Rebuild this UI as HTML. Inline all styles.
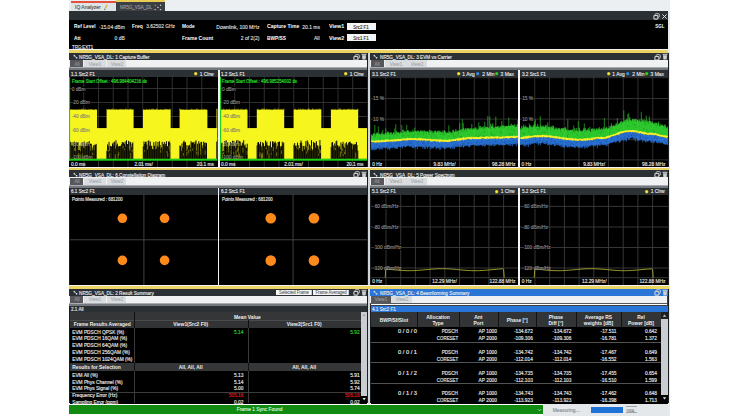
<!DOCTYPE html>
<html><head><meta charset="utf-8"><style>
html,body{margin:0;padding:0;}
body{width:740px;height:416px;overflow:hidden;background:#fff;position:relative;font-family:"Liberation Sans",sans-serif;}
body>div{position:absolute;}
svg{display:block}
</style></head><body>
<div style="left:69px;top:0px;width:601px;height:11px;background:#eceff2;"></div>
<div style="left:70.5px;top:1.2px;width:45.3px;height:2.2px;background:#e4503c;"></div>
<div style="left:70.5px;top:3.4px;width:45.3px;height:7.6px;background:#dde3e7;"></div>
<div style="left:75px;top:3.20px;height:8px;line-height:8px;font-size:5.5px;color:#4e5358;white-space:nowrap;transform:scaleX(0.9);transform-origin:left;-webkit-text-stroke:0.15px #4e5358;">IQ Analyzer</div>
<svg style="position:absolute;left:103px;top:4px" width="5" height="6.5" viewBox="0 0 5 6.5"><path d="M3.6,0.6 L4.6,1.2 L2.2,5.6 L1.2,5.1 Z" fill="#e0b020"/><path d="M1.2,5.1 L2.2,5.6 L1.3,6.3 Z" fill="#303030"/></svg>
<div style="left:115.8px;top:0px;width:49.2px;height:2.2px;background:#e9cd55;"></div>
<div style="left:115.8px;top:2.2px;width:49.2px;height:8.8px;background:#3c3f43;"></div>
<div style="left:120.2px;top:3.20px;height:8px;line-height:8px;font-size:5.3px;color:#9a9ea2;white-space:nowrap;transform:scaleX(0.84);transform-origin:left;-webkit-text-stroke:0.15px #9a9ea2;">NR5G_VSA_DL</div>
<svg style="position:absolute;left:153.5px;top:3.5px" width="8.0" height="7.0" viewBox="0 0 8.0 7.0"><g fill="#d8d8d8"><circle cx="1.2" cy="5.6" r="0.7"/><circle cx="6.6" cy="1.2" r="0.7"/><circle cx="6.6" cy="5.6" r="0.7"/><circle cx="3.9" cy="3.4" r="0.7"/><circle cx="1.2" cy="1.2" r="0.5"/></g></svg>
<div style="left:69px;top:11px;width:599px;height:9px;background:#2b3034;"></div>
<div style="left:668px;top:11px;width:2px;height:405px;background:#e8ebee;"></div>
<div style="left:69px;top:20px;width:599px;height:29px;background:#000;"></div>
<div style="left:69px;top:49px;width:599px;height:1px;background:#f2f2f2;"></div>
<div style="left:69px;top:50px;width:599px;height:3px;background:#ecd462;"></div>
<svg style="position:absolute;left:653.2px;top:12.6px" width="7.0" height="7.000000000000002" viewBox="0 0 7.0 7.000000000000002"><path d="M2.2,2.2 V1.4 Q2.2,0.7 2.9,0.7 H5.6 Q6.3,0.7 6.3,1.4 V3.6 Q6.3,4.3 5.6,4.3 H4.9" fill="none" stroke="#d0d0d0" stroke-width="0.9"/><rect x="0.9" y="2.5" width="4" height="3.6" rx="0.9" fill="none" stroke="#d0d0d0" stroke-width="1.1"/></svg>
<svg style="position:absolute;left:661.4px;top:12.6px" width="7.0" height="7.000000000000002" viewBox="0 0 7.0 7.000000000000002"><path d="M1.4,1.4 L5.6,5.6 M5.6,1.4 L1.4,5.6" stroke="#e0e0e0" stroke-width="1.0"/></svg>
<div style="left:74px;top:22.10px;height:8px;line-height:8px;font-size:5.9px;color:#fff;font-weight:bold;white-space:nowrap;transform:scaleX(0.82);transform-origin:left;">Ref Level</div>
<div style="left:99px;top:23.20px;height:8px;line-height:8px;font-size:5.0px;color:#ddd;white-space:nowrap;-webkit-text-stroke:0.15px #ddd;">-15.04 dBm</div>
<div style="left:132.2px;top:22.10px;height:8px;line-height:8px;font-size:5.9px;color:#fff;font-weight:bold;white-space:nowrap;transform:scaleX(0.84);transform-origin:left;">Freq</div>
<div style="right:565px;text-align:right;top:23.20px;height:8px;line-height:8px;font-size:4.9px;color:#ddd;white-space:nowrap;-webkit-text-stroke:0.15px #ddd;">3.62502 GHz</div>
<div style="left:181.5px;top:22.10px;height:8px;line-height:8px;font-size:5.9px;color:#fff;font-weight:bold;white-space:nowrap;transform:scaleX(0.82);transform-origin:left;">Mode</div>
<div style="right:480.6px;text-align:right;top:23.20px;height:8px;line-height:8px;font-size:5.0px;color:#ddd;white-space:nowrap;-webkit-text-stroke:0.15px #ddd;">Downlink, 100 MHz</div>
<div style="left:266.8px;top:22.10px;height:8px;line-height:8px;font-size:5.9px;color:#fff;font-weight:bold;white-space:nowrap;transform:scaleX(0.86);transform-origin:left;">Capture Time</div>
<div style="right:420px;text-align:right;top:23.20px;height:8px;line-height:8px;font-size:5.0px;color:#ddd;white-space:nowrap;-webkit-text-stroke:0.15px #ddd;">20.1 ms</div>
<div style="left:329px;top:22.10px;height:8px;line-height:8px;font-size:5.9px;color:#fff;font-weight:bold;white-space:nowrap;transform:scaleX(0.92);transform-origin:left;">View1</div>
<div style="left:346.5px;top:23px;width:29.5px;height:6.5px;background:#f4f4f4;"></div>
<div style="left:211px;width:300px;text-align:center;top:23.10px;height:8px;line-height:8px;font-size:5.0px;color:#333;white-space:nowrap;transform:scaleX(0.88);transform-origin:center;-webkit-text-stroke:0.15px #333;">Src2 F1</div>
<div style="left:74px;top:33.50px;height:8px;line-height:8px;font-size:5.9px;color:#fff;font-weight:bold;white-space:nowrap;transform:scaleX(0.82);transform-origin:left;">Att</div>
<div style="right:615.2px;text-align:right;top:34.40px;height:8px;line-height:8px;font-size:5.0px;color:#ddd;white-space:nowrap;-webkit-text-stroke:0.15px #ddd;">0 dB</div>
<div style="left:181.5px;top:33.50px;height:8px;line-height:8px;font-size:5.9px;color:#fff;font-weight:bold;white-space:nowrap;transform:scaleX(0.86);transform-origin:left;">Frame Count</div>
<div style="right:480.6px;text-align:right;top:34.40px;height:8px;line-height:8px;font-size:5.0px;color:#ddd;white-space:nowrap;-webkit-text-stroke:0.15px #ddd;">2 of 2(2)</div>
<div style="left:266.8px;top:33.50px;height:8px;line-height:8px;font-size:5.9px;color:#fff;font-weight:bold;white-space:nowrap;transform:scaleX(0.82);transform-origin:left;">BWP/SS</div>
<div style="right:420.5px;text-align:right;top:34.40px;height:8px;line-height:8px;font-size:5.0px;color:#ddd;white-space:nowrap;-webkit-text-stroke:0.15px #ddd;">All</div>
<div style="left:329px;top:33.50px;height:8px;line-height:8px;font-size:5.9px;color:#fff;font-weight:bold;white-space:nowrap;transform:scaleX(0.92);transform-origin:left;">View2</div>
<div style="left:346.5px;top:34px;width:29.5px;height:6.5px;background:#f4f4f4;"></div>
<div style="left:211px;width:300px;text-align:center;top:34.10px;height:8px;line-height:8px;font-size:5.0px;color:#333;white-space:nowrap;transform:scaleX(0.88);transform-origin:center;-webkit-text-stroke:0.15px #333;">Src1 F1</div>
<div style="left:71.5px;top:43.00px;height:8px;line-height:8px;font-size:5.0px;color:#e4e4e4;white-space:nowrap;transform:scaleX(0.86);transform-origin:left;-webkit-text-stroke:0.15px #e4e4e4;">TRG:EXT1</div>
<div style="right:76px;text-align:right;top:22.20px;height:8px;line-height:8px;font-size:5.6px;color:#fff;font-weight:bold;white-space:nowrap;transform:scaleX(0.8);transform-origin:right;">SGL</div>
<div style="left:367.5px;top:53px;width:2.6999999999999886px;height:350.5px;background:#d3d6d9;"></div>
<div style="left:69.4px;top:52.8px;width:0.7999999999999972px;height:350.7px;background:#1c1f22;"></div>
<div style="left:366.9px;top:52.8px;width:0.6000000000000227px;height:350.7px;background:#1c1f22;"></div>
<div style="left:370.2px;top:52.8px;width:0.8000000000000114px;height:350.7px;background:#1c1f22;"></div>
<div style="left:667.8px;top:52.8px;width:0.5px;height:350.7px;background:#1c1f22;"></div>
<div style="left:69px;top:167px;width:600px;height:1px;background:#f2f2f2;"></div>
<div style="left:69px;top:168px;width:600px;height:2px;background:#ecd462;"></div>
<div style="left:69px;top:285px;width:600px;height:1px;background:#f2f2f2;"></div>
<div style="left:69px;top:286px;width:600px;height:3px;background:#ecd462;"></div>
<div style="left:69.4px;top:52.8px;width:298.1px;height:7.0px;background:#2b3035;"></div>
<svg style="position:absolute;left:72.60000000000001px;top:54.4px" width="5.0" height="5.0" viewBox="0 0 5.0 5.0"><rect x="0.6" y="0.9" width="1.5" height="1.5" fill="#d8d8d8"/><path d="M1.6,1.9 L3.6,3.9" stroke="#d8d8d8" stroke-width="0.8"/><rect x="2.9" y="3.0" width="1.4" height="1.6" fill="#d8d8d8"/></svg>
<div style="left:79.0px;top:53.10px;height:8px;line-height:8px;font-size:5.1px;color:#e6e6e6;white-space:nowrap;transform:scaleX(0.92);transform-origin:left;-webkit-text-stroke:0.15px #e6e6e6;">NR5G_VSA_DL: 1 Capture Buffer</div>
<svg style="position:absolute;left:352.7px;top:53.599999999999994px" width="7.0" height="7.0" viewBox="0 0 7.0 7.0"><path d="M2.2,2.2 V1.4 Q2.2,0.7 2.9,0.7 H5.6 Q6.3,0.7 6.3,1.4 V3.6 Q6.3,4.3 5.6,4.3 H4.9" fill="none" stroke="#d0d0d0" stroke-width="0.9"/><rect x="0.9" y="2.5" width="4" height="3.6" rx="0.9" fill="none" stroke="#d0d0d0" stroke-width="1.1"/></svg>
<svg style="position:absolute;left:361.0px;top:53.0px" width="6.0" height="7.0" viewBox="0 0 6.0 7.0"><rect x="0.5" y="0.8" width="5" height="1" fill="#d0d0d0"/><path d="M1,2.3 L5,2.3 L4.6,6.6 L1.4,6.6 Z" fill="#d0d0d0"/></svg>
<div style="left:69.4px;top:59.8px;width:298.1px;height:7.5px;background:#eff1f3;"></div>
<div style="left:70.30000000000001px;top:60.099999999999994px;width:12.700000000000003px;height:7.299999999999997px;background:#57565a;"></div>
<div style="left:-73.35px;width:300px;text-align:center;top:60.60px;height:8px;line-height:8px;font-size:4.9px;color:#8e9194;white-space:nowrap;transform:scaleX(0.95);transform-origin:center;-webkit-text-stroke:0.15px #8e9194;">All</div>
<div style="left:83.70000000000002px;top:60.099999999999994px;width:22.200000000000003px;height:7.299999999999997px;background:#dadde0;"></div>
<div style="left:-55.19999999999999px;width:300px;text-align:center;top:60.60px;height:8px;line-height:8px;font-size:4.9px;color:#a9acaf;white-space:nowrap;transform:scaleX(0.95);transform-origin:center;-webkit-text-stroke:0.15px #a9acaf;">View1</div>
<div style="left:106.60000000000002px;top:60.099999999999994px;width:19.799999999999997px;height:7.299999999999997px;background:#dadde0;"></div>
<div style="left:-33.49999999999997px;width:300px;text-align:center;top:60.60px;height:8px;line-height:8px;font-size:4.9px;color:#a9acaf;white-space:nowrap;transform:scaleX(0.95);transform-origin:center;-webkit-text-stroke:0.15px #a9acaf;">View2</div>
<div style="left:69.4px;top:67.3px;width:298.1px;height:1.0px;background:#a9adb1;"></div>
<div style="left:69.4px;top:68.3px;width:298.1px;height:2.0px;background:#74787c;"></div>
<div style="left:69.4px;top:70.3px;width:148.6px;height:6.299999999999997px;background:#2b3035;"></div>
<div style="left:70.9px;top:69.55px;height:8px;line-height:8px;font-size:5.3px;color:#e8e8e8;white-space:nowrap;transform:scaleX(0.87);transform-origin:left;-webkit-text-stroke:0.15px #e8e8e8;">1.1 Src2 F1</div>
<div style="right:526.0px;text-align:right;top:69.55px;height:8px;line-height:8px;font-size:5.9px;color:#e8e8e8;white-space:nowrap;transform:scaleX(0.84);transform-origin:right;-webkit-text-stroke:0.15px #e8e8e8;">1 Clrw</div>
<svg style="position:absolute;left:193.35748375px;top:70.94999999999999px" width="6.0" height="6.0" viewBox="0 0 6.0 6.0"><circle cx="2.7" cy="2.7" r="1.85" fill="#f5e63a" stroke="#111" stroke-width="0.4"/></svg>
<div style="left:219.6px;top:70.3px;width:147.9px;height:6.299999999999997px;background:#2b3035;"></div>
<div style="left:221.1px;top:69.55px;height:8px;line-height:8px;font-size:5.3px;color:#e8e8e8;white-space:nowrap;transform:scaleX(0.87);transform-origin:left;-webkit-text-stroke:0.15px #e8e8e8;">1.2 Src1 F1</div>
<div style="right:376.5px;text-align:right;top:69.55px;height:8px;line-height:8px;font-size:5.9px;color:#e8e8e8;white-space:nowrap;transform:scaleX(0.84);transform-origin:right;-webkit-text-stroke:0.15px #e8e8e8;">1 Clrw</div>
<svg style="position:absolute;left:342.85748375px;top:70.94999999999999px" width="6.0" height="6.0" viewBox="0 0 6.0 6.0"><circle cx="2.7" cy="2.7" r="1.85" fill="#f5e63a" stroke="#111" stroke-width="0.4"/></svg>
<div style="left:69.4px;top:76.5px;width:148.4px;height:90.5px;background:#000;"></div>
<svg style="position:absolute;left:69.4px;top:76.5px" width="148.4" height="90.5" viewBox="0 0 148.4 90.5"><line x1="14.75" y1="0" x2="14.75" y2="90.5" stroke="#363636" stroke-width="0.9"/><line x1="29.50" y1="0" x2="29.50" y2="90.5" stroke="#363636" stroke-width="0.9"/><line x1="44.25" y1="0" x2="44.25" y2="90.5" stroke="#363636" stroke-width="0.9"/><line x1="59.00" y1="0" x2="59.00" y2="90.5" stroke="#363636" stroke-width="0.9"/><line x1="73.75" y1="0" x2="73.75" y2="90.5" stroke="#363636" stroke-width="0.9"/><line x1="88.50" y1="0" x2="88.50" y2="90.5" stroke="#363636" stroke-width="0.9"/><line x1="103.25" y1="0" x2="103.25" y2="90.5" stroke="#363636" stroke-width="0.9"/><line x1="118.00" y1="0" x2="118.00" y2="90.5" stroke="#363636" stroke-width="0.9"/><line x1="132.75" y1="0" x2="132.75" y2="90.5" stroke="#363636" stroke-width="0.9"/><line x1="0" y1="11.50" x2="148.4" y2="11.50" stroke="#363636" stroke-width="0.9"/><line x1="0" y1="25.50" x2="148.4" y2="25.50" stroke="#363636" stroke-width="0.9"/><line x1="0" y1="39.50" x2="148.4" y2="39.50" stroke="#363636" stroke-width="0.9"/><line x1="0" y1="53.50" x2="148.4" y2="53.50" stroke="#363636" stroke-width="0.9"/><line x1="0" y1="67.50" x2="148.4" y2="67.50" stroke="#363636" stroke-width="0.9"/><rect x="1.00" y="32.80" width="27.10" height="19.30" fill="#f6f61e"/><path d="M1.00,32.80v-0.39M1.70,32.80v-0.18M2.40,32.80v-0.78M3.10,32.80v-0.09M3.80,32.80v-0.64M4.50,32.80v-0.44M5.20,32.80v-0.07M5.90,32.80v-0.61M6.60,32.80v-0.04M7.30,32.80v-0.52M8.00,32.80v-0.08M8.70,32.80v-0.11M9.40,32.80v-0.51M10.10,32.80v-0.99M10.80,32.80v-0.15M11.50,32.80v-0.27M12.20,32.80v-0.75M12.90,32.80v-1.14M13.60,32.80v-0.69M14.30,32.80v-0.48M15.00,32.80v-1.17M15.70,32.80v-0.06M16.40,32.80v-1.03M17.10,32.80v-0.35M17.80,32.80v-0.17M18.50,32.80v-0.14M19.20,32.80v-0.37M19.90,32.80v-0.98M20.60,32.80v-0.22M21.30,32.80v-0.70M22.00,32.80v-0.77M22.70,32.80v-0.45M23.40,32.80v-0.66M24.10,32.80v-0.08M24.80,32.80v-0.07M25.50,32.80v-0.25M26.20,32.80v-0.82M26.90,32.80v-0.51M27.60,32.80v-0.38" stroke="#f6f61e" stroke-width="0.6"/><rect x="37.60" y="32.80" width="27.00" height="19.30" fill="#f6f61e"/><path d="M37.60,32.80v-0.70M38.30,32.80v-0.54M39.00,32.80v-0.36M39.70,32.80v-0.95M40.40,32.80v-0.84M41.10,32.80v-0.29M41.80,32.80v-0.69M42.50,32.80v-0.63M43.20,32.80v-1.05M43.90,32.80v-0.88M44.60,32.80v-0.35M45.30,32.80v-1.18M46.00,32.80v-0.14M46.70,32.80v-0.50M47.40,32.80v-0.91M48.10,32.80v-0.18M48.80,32.80v-0.59M49.50,32.80v-0.05M50.20,32.80v-0.80M50.90,32.80v-0.92M51.60,32.80v-0.69M52.30,32.80v-1.05M53.00,32.80v-0.38M53.70,32.80v-0.83M54.40,32.80v-0.71M55.10,32.80v-0.70M55.80,32.80v-0.55M56.50,32.80v-1.01M57.20,32.80v-1.13M57.90,32.80v-0.57M58.60,32.80v-0.80M59.30,32.80v-0.07M60.00,32.80v-0.84M60.70,32.80v-0.78M61.40,32.80v-1.19M62.10,32.80v-0.99M62.80,32.80v-0.34M63.50,32.80v-0.46M64.20,32.80v-0.80" stroke="#f6f61e" stroke-width="0.6"/><rect x="74.00" y="32.80" width="27.70" height="19.30" fill="#f6f61e"/><path d="M74.00,32.80v-0.03M74.70,32.80v-0.55M75.40,32.80v-0.20M76.10,32.80v-0.14M76.80,32.80v-0.07M77.50,32.80v-0.92M78.20,32.80v-0.16M78.90,32.80v-0.30M79.60,32.80v-0.47M80.30,32.80v-1.05M81.00,32.80v-0.10M81.70,32.80v-0.54M82.40,32.80v-0.66M83.10,32.80v-1.06M83.80,32.80v-0.98M84.50,32.80v-1.04M85.20,32.80v-0.33M85.90,32.80v-0.50M86.60,32.80v-0.43M87.30,32.80v-1.06M88.00,32.80v-1.15M88.70,32.80v-0.18M89.40,32.80v-0.21M90.10,32.80v-0.28M90.80,32.80v-0.28M91.50,32.80v-0.58M92.20,32.80v-0.71M92.90,32.80v-0.32M93.60,32.80v-0.00M94.30,32.80v-0.50M95.00,32.80v-0.44M95.70,32.80v-0.68M96.40,32.80v-1.14M97.10,32.80v-0.83M97.80,32.80v-0.62M98.50,32.80v-0.74M99.20,32.80v-0.81M99.90,32.80v-0.06M100.60,32.80v-1.08M101.30,32.80v-0.94" stroke="#f6f61e" stroke-width="0.6"/><rect x="110.60" y="32.80" width="27.80" height="19.30" fill="#f6f61e"/><path d="M110.60,32.80v-1.05M111.30,32.80v-0.96M112.00,32.80v-0.47M112.70,32.80v-0.48M113.40,32.80v-0.12M114.10,32.80v-0.76M114.80,32.80v-0.07M115.50,32.80v-0.08M116.20,32.80v-0.25M116.90,32.80v-0.19M117.60,32.80v-0.41M118.30,32.80v-0.06M119.00,32.80v-0.00M119.70,32.80v-0.18M120.40,32.80v-0.12M121.10,32.80v-0.44M121.80,32.80v-0.03M122.50,32.80v-1.05M123.20,32.80v-0.74M123.90,32.80v-0.18M124.60,32.80v-0.30M125.30,32.80v-0.42M126.00,32.80v-0.44M126.70,32.80v-0.15M127.40,32.80v-1.02M128.10,32.80v-1.19M128.80,32.80v-0.56M129.50,32.80v-0.58M130.20,32.80v-0.10M130.90,32.80v-0.12M131.60,32.80v-0.41M132.30,32.80v-0.32M133.00,32.80v-0.99M133.70,32.80v-0.19M134.40,32.80v-0.03M135.10,32.80v-1.14M135.80,32.80v-0.63M136.50,32.80v-0.18M137.20,32.80v-0.65M137.90,32.80v-0.03" stroke="#f6f61e" stroke-width="0.6"/><rect x="147.50" y="32.80" width="0.90" height="19.30" fill="#f6f61e"/><path d="M147.50,32.80v-0.63M148.20,32.80v-1.17" stroke="#f6f61e" stroke-width="0.6"/><rect x="1.00" y="51.30" width="147.40" height="10.50" fill="#f6f61e"/><rect x="27.60" y="51.30" width="10.50" height="30.60" fill="#f6f61e"/><rect x="64.10" y="51.30" width="10.40" height="30.60" fill="#f6f61e"/><rect x="101.20" y="51.30" width="9.90" height="30.60" fill="#f6f61e"/><rect x="137.90" y="51.30" width="10.10" height="30.60" fill="#f6f61e"/><rect x="1.00" y="60.90" width="27.10" height="21.00" fill="#f6f61e"/><rect x="37.60" y="60.90" width="27.00" height="21.00" fill="#f6f61e"/><rect x="74.00" y="60.90" width="27.70" height="21.00" fill="#f6f61e"/><rect x="110.60" y="60.90" width="27.80" height="21.00" fill="#f6f61e"/><rect x="147.50" y="60.90" width="0.90" height="21.00" fill="#f6f61e"/><path d="M1.30,81.90V64.74M2.00,81.90V65.34M2.70,81.90V68.40M3.40,81.90V68.56M4.10,81.90V65.02M4.80,81.90V69.86M5.50,81.90V64.64M6.20,81.90V74.24M6.90,81.90V65.47M7.60,81.90V65.60M8.30,81.90V65.52M9.00,81.90V65.10M9.70,81.90V73.30M10.40,81.90V73.00M11.10,81.90V68.45M11.80,81.90V74.33M12.50,81.90V69.23M13.20,81.90V65.14M13.90,81.90V68.63M14.60,81.90V70.60M15.30,81.90V64.57M16.00,81.90V71.66M16.70,81.90V68.86M17.40,81.90V65.76M18.10,81.90V67.43M18.80,81.90V65.16M19.50,81.90V66.79M20.20,81.90V64.05M20.90,81.90V67.16M21.60,81.90V66.70M22.30,81.90V66.87M23.00,81.90V70.46M23.70,81.90V73.21M24.40,81.90V68.36M25.10,81.90V73.06M25.80,81.90V67.56M26.50,81.90V67.96M27.20,81.90V66.89M37.90,81.90V73.76M38.60,81.90V67.30M39.30,81.90V69.32M40.00,81.90V64.87M40.70,81.90V73.88M41.40,81.90V68.91M42.10,81.90V69.26M42.80,81.90V69.45M43.50,81.90V66.66M44.20,81.90V65.48M44.90,81.90V68.62M45.60,81.90V64.59M46.30,81.90V71.57M47.00,81.90V63.26M47.70,81.90V68.39M48.40,81.90V66.61M49.10,81.90V70.05M49.80,81.90V69.04M50.50,81.90V69.19M51.20,81.90V69.00M51.90,81.90V68.81M52.60,81.90V67.27M53.30,81.90V65.15M54.00,81.90V65.05M54.70,81.90V66.03M55.40,81.90V67.00M56.10,81.90V64.58M56.80,81.90V69.64M57.50,81.90V63.27M58.20,81.90V66.98M58.90,81.90V67.03M59.60,81.90V63.86M60.30,81.90V72.32M61.00,81.90V64.77M61.70,81.90V65.32M62.40,81.90V70.19M63.10,81.90V66.80M63.80,81.90V65.43M74.30,81.90V69.33M75.00,81.90V64.51M75.70,81.90V67.01M76.40,81.90V64.95M77.10,81.90V64.61M77.80,81.90V67.43M78.50,81.90V72.45M79.20,81.90V63.97M79.90,81.90V63.37M80.60,81.90V68.76M81.30,81.90V64.57M82.00,81.90V69.34M82.70,81.90V68.67M83.40,81.90V72.00M84.10,81.90V72.66M84.80,81.90V65.17M85.50,81.90V68.68M86.20,81.90V72.26M86.90,81.90V64.52M87.60,81.90V71.52M88.30,81.90V68.90M89.00,81.90V64.87M89.70,81.90V69.73M90.40,81.90V64.23M91.10,81.90V67.92M91.80,81.90V72.36M92.50,81.90V70.33M93.20,81.90V64.80M93.90,81.90V72.65M94.60,81.90V67.08M95.30,81.90V65.09M96.00,81.90V69.39M96.70,81.90V66.79M97.40,81.90V64.12M98.10,81.90V69.23M98.80,81.90V69.26M99.50,81.90V64.76M100.20,81.90V64.22M100.90,81.90V66.01M110.90,81.90V68.51M111.60,81.90V69.22M112.30,81.90V73.91M113.00,81.90V66.46M113.70,81.90V70.66M114.40,81.90V64.74M115.10,81.90V63.62M115.80,81.90V65.45M116.50,81.90V65.21M117.20,81.90V73.98M117.90,81.90V68.10M118.60,81.90V72.37M119.30,81.90V69.13M120.00,81.90V68.20M120.70,81.90V67.78M121.40,81.90V70.87M122.10,81.90V64.24M122.80,81.90V65.49M123.50,81.90V65.46M124.20,81.90V65.79M124.90,81.90V64.87M125.60,81.90V67.12M126.30,81.90V64.81M127.00,81.90V63.31M127.70,81.90V73.68M128.40,81.90V66.73M129.10,81.90V73.74M129.80,81.90V64.18M130.50,81.90V66.46M131.20,81.90V73.63M131.90,81.90V65.05M132.60,81.90V64.80M133.30,81.90V71.24M134.00,81.90V68.41M134.70,81.90V64.61M135.40,81.90V65.76M136.10,81.90V69.17M136.80,81.90V65.62M137.50,81.90V66.01M147.80,81.90V64.61" stroke="#000" stroke-width="0.95"/><path d="M5.50,71.01v2.67M9.70,76.07v5.59M13.20,76.64v5.13M21.60,68.54v5.10M23.70,75.61v2.62M39.30,72.94v1.83M40.70,76.47v4.47M46.30,77.41v5.05M49.10,76.90v4.07M49.80,74.86v3.41M54.00,68.95v2.41M55.40,71.62v1.58M61.00,69.14v4.83M61.70,76.07v5.42M63.10,72.51v2.68M75.70,73.04v1.52M91.80,73.11v2.64M98.10,74.04v2.14M98.80,76.02v3.79M100.20,68.53v3.71M100.90,71.60v2.92M114.40,76.01v2.79M117.90,75.09v3.53M119.30,73.08v3.05M121.40,71.94v2.44M123.50,71.58v1.91M127.70,74.71v2.62M129.10,73.86v4.69M131.90,73.20v4.57M136.10,73.54v4.12" stroke="#b0b020" stroke-width="0.55"/><rect x="0" y="0" width="1.1" height="83.70" fill="#19d419"/><rect x="0" y="81.80" width="148.4" height="1.9" fill="#19d419"/></svg>
<div style="left:71.7px;top:77.80px;height:8px;line-height:8px;font-size:4.9px;color:#2ee02e;white-space:nowrap;transform:scaleX(0.885);transform-origin:left;-webkit-text-stroke:0.15px #2ee02e;">Frame Start Offset : 496.984404216 ds</div>
<div style="left:71.7px;top:86.60px;height:5px;line-height:5px;font-size:4.8px;color:#8a8a8a;white-space:nowrap;-webkit-text-stroke:0.15px #8a8a8a;background:#000;padding-right:0.6px">0 dBm</div>
<div style="left:71.7px;top:100.30px;height:5px;line-height:5px;font-size:4.8px;color:#8a8a8a;white-space:nowrap;-webkit-text-stroke:0.15px #8a8a8a;background:#000;padding-right:0.6px">-20 dBm</div>
<div style="left:71.7px;top:114.00px;height:5px;line-height:5px;font-size:4.8px;color:#8c8c6a;white-space:nowrap;-webkit-text-stroke:0.15px #8c8c6a;">-40 dBm</div>
<div style="left:71.7px;top:127.90px;height:5px;line-height:5px;font-size:4.8px;color:#8c8c6a;white-space:nowrap;-webkit-text-stroke:0.15px #8c8c6a;">-60 dBm</div>
<div style="left:71.7px;top:141.70px;height:5px;line-height:5px;font-size:4.8px;color:#8c8c6a;white-space:nowrap;-webkit-text-stroke:0.15px #8c8c6a;">-80 dBm</div>
<div style="left:71.7px;top:154.50px;height:5px;line-height:5px;font-size:4.8px;color:#8c8c6a;white-space:nowrap;-webkit-text-stroke:0.15px #8c8c6a;">-100 dBm</div>
<div style="left:70.9px;top:161.10px;height:8px;line-height:8px;font-size:4.8px;color:#e0e0e0;white-space:nowrap;-webkit-text-stroke:0.15px #e0e0e0;">0.0 ms</div>
<div style="left:-6.399999999999977px;width:300px;text-align:center;top:161.10px;height:8px;line-height:8px;font-size:4.8px;color:#e0e0e0;white-space:nowrap;-webkit-text-stroke:0.15px #e0e0e0;">2.01 ms/</div>
<div style="right:526.2px;text-align:right;top:161.10px;height:8px;line-height:8px;font-size:4.8px;color:#e0e0e0;white-space:nowrap;-webkit-text-stroke:0.15px #e0e0e0;">20.1 ms</div>
<div style="left:219.6px;top:76.5px;width:147.9px;height:90.5px;background:#000;"></div>
<svg style="position:absolute;left:219.6px;top:76.5px" width="147.9" height="90.5" viewBox="0 0 147.9 90.5"><line x1="14.75" y1="0" x2="14.75" y2="90.5" stroke="#363636" stroke-width="0.9"/><line x1="29.50" y1="0" x2="29.50" y2="90.5" stroke="#363636" stroke-width="0.9"/><line x1="44.25" y1="0" x2="44.25" y2="90.5" stroke="#363636" stroke-width="0.9"/><line x1="59.00" y1="0" x2="59.00" y2="90.5" stroke="#363636" stroke-width="0.9"/><line x1="73.75" y1="0" x2="73.75" y2="90.5" stroke="#363636" stroke-width="0.9"/><line x1="88.50" y1="0" x2="88.50" y2="90.5" stroke="#363636" stroke-width="0.9"/><line x1="103.25" y1="0" x2="103.25" y2="90.5" stroke="#363636" stroke-width="0.9"/><line x1="118.00" y1="0" x2="118.00" y2="90.5" stroke="#363636" stroke-width="0.9"/><line x1="132.75" y1="0" x2="132.75" y2="90.5" stroke="#363636" stroke-width="0.9"/><line x1="0" y1="11.50" x2="147.9" y2="11.50" stroke="#363636" stroke-width="0.9"/><line x1="0" y1="25.50" x2="147.9" y2="25.50" stroke="#363636" stroke-width="0.9"/><line x1="0" y1="39.50" x2="147.9" y2="39.50" stroke="#363636" stroke-width="0.9"/><line x1="0" y1="53.50" x2="147.9" y2="53.50" stroke="#363636" stroke-width="0.9"/><line x1="0" y1="67.50" x2="147.9" y2="67.50" stroke="#363636" stroke-width="0.9"/><rect x="1.00" y="32.80" width="26.50" height="19.30" fill="#f6f61e"/><path d="M1.00,32.80v-0.57M1.70,32.80v-0.28M2.40,32.80v-0.30M3.10,32.80v-1.15M3.80,32.80v-0.85M4.50,32.80v-0.37M5.20,32.80v-0.03M5.90,32.80v-0.60M6.60,32.80v-0.81M7.30,32.80v-0.50M8.00,32.80v-0.31M8.70,32.80v-0.80M9.40,32.80v-1.11M10.10,32.80v-0.27M10.80,32.80v-0.04M11.50,32.80v-0.41M12.20,32.80v-0.50M12.90,32.80v-0.82M13.60,32.80v-0.24M14.30,32.80v-0.96M15.00,32.80v-0.89M15.70,32.80v-0.61M16.40,32.80v-0.25M17.10,32.80v-1.16M17.80,32.80v-0.37M18.50,32.80v-0.98M19.20,32.80v-0.28M19.90,32.80v-0.27M20.60,32.80v-0.91M21.30,32.80v-0.35M22.00,32.80v-1.14M22.70,32.80v-0.59M23.40,32.80v-0.22M24.10,32.80v-0.27M24.80,32.80v-0.50M25.50,32.80v-0.80M26.20,32.80v-1.14M26.90,32.80v-0.18" stroke="#f6f61e" stroke-width="0.6"/><rect x="36.80" y="32.80" width="27.40" height="19.30" fill="#f6f61e"/><path d="M36.80,32.80v-0.47M37.50,32.80v-0.26M38.20,32.80v-1.17M38.90,32.80v-0.17M39.60,32.80v-0.06M40.30,32.80v-0.07M41.00,32.80v-0.47M41.70,32.80v-1.08M42.40,32.80v-1.06M43.10,32.80v-0.88M43.80,32.80v-1.20M44.50,32.80v-1.12M45.20,32.80v-0.40M45.90,32.80v-0.22M46.60,32.80v-1.12M47.30,32.80v-0.90M48.00,32.80v-0.04M48.70,32.80v-0.80M49.40,32.80v-0.45M50.10,32.80v-0.45M50.80,32.80v-0.40M51.50,32.80v-0.20M52.20,32.80v-0.00M52.90,32.80v-0.34M53.60,32.80v-0.42M54.30,32.80v-1.15M55.00,32.80v-0.15M55.70,32.80v-1.16M56.40,32.80v-0.25M57.10,32.80v-0.43M57.80,32.80v-0.99M58.50,32.80v-0.99M59.20,32.80v-0.52M59.90,32.80v-0.06M60.60,32.80v-0.57M61.30,32.80v-0.45M62.00,32.80v-1.10M62.70,32.80v-0.23M63.40,32.80v-0.44M64.10,32.80v-1.08" stroke="#f6f61e" stroke-width="0.6"/><rect x="73.70" y="32.80" width="27.60" height="19.30" fill="#f6f61e"/><path d="M73.70,32.80v-0.04M74.40,32.80v-0.49M75.10,32.80v-0.97M75.80,32.80v-0.92M76.50,32.80v-0.05M77.20,32.80v-0.04M77.90,32.80v-0.08M78.60,32.80v-1.10M79.30,32.80v-0.31M80.00,32.80v-0.90M80.70,32.80v-1.08M81.40,32.80v-0.41M82.10,32.80v-0.33M82.80,32.80v-1.15M83.50,32.80v-0.74M84.20,32.80v-0.31M84.90,32.80v-0.86M85.60,32.80v-0.38M86.30,32.80v-0.33M87.00,32.80v-0.00M87.70,32.80v-0.91M88.40,32.80v-1.10M89.10,32.80v-0.76M89.80,32.80v-1.13M90.50,32.80v-0.03M91.20,32.80v-0.28M91.90,32.80v-0.57M92.60,32.80v-1.15M93.30,32.80v-1.14M94.00,32.80v-0.46M94.70,32.80v-0.30M95.40,32.80v-0.52M96.10,32.80v-0.59M96.80,32.80v-1.11M97.50,32.80v-0.22M98.20,32.80v-0.96M98.90,32.80v-0.89M99.60,32.80v-0.99M100.30,32.80v-0.93M101.00,32.80v-0.73" stroke="#f6f61e" stroke-width="0.6"/><rect x="110.90" y="32.80" width="27.30" height="19.30" fill="#f6f61e"/><path d="M110.90,32.80v-0.39M111.60,32.80v-0.38M112.30,32.80v-0.43M113.00,32.80v-0.94M113.70,32.80v-0.09M114.40,32.80v-0.24M115.10,32.80v-0.90M115.80,32.80v-0.30M116.50,32.80v-0.08M117.20,32.80v-0.04M117.90,32.80v-0.66M118.60,32.80v-0.39M119.30,32.80v-1.18M120.00,32.80v-1.06M120.70,32.80v-1.19M121.40,32.80v-0.32M122.10,32.80v-0.10M122.80,32.80v-0.12M123.50,32.80v-0.60M124.20,32.80v-0.85M124.90,32.80v-0.54M125.60,32.80v-0.28M126.30,32.80v-0.50M127.00,32.80v-0.74M127.70,32.80v-0.81M128.40,32.80v-0.90M129.10,32.80v-1.02M129.80,32.80v-0.80M130.50,32.80v-0.15M131.20,32.80v-1.01M131.90,32.80v-0.35M132.60,32.80v-0.68M133.30,32.80v-0.45M134.00,32.80v-0.89M134.70,32.80v-0.24M135.40,32.80v-0.30M136.10,32.80v-0.29M136.80,32.80v-0.18M137.50,32.80v-1.06M138.20,32.80v-0.69" stroke="#f6f61e" stroke-width="0.6"/><rect x="1.00" y="51.30" width="146.90" height="10.50" fill="#f6f61e"/><rect x="27.00" y="51.30" width="10.30" height="30.60" fill="#f6f61e"/><rect x="63.70" y="51.30" width="10.50" height="30.60" fill="#f6f61e"/><rect x="100.80" y="51.30" width="10.60" height="30.60" fill="#f6f61e"/><rect x="137.70" y="51.30" width="10.20" height="30.60" fill="#f6f61e"/><rect x="1.00" y="60.90" width="26.50" height="21.00" fill="#f6f61e"/><rect x="36.80" y="60.90" width="27.40" height="21.00" fill="#f6f61e"/><rect x="73.70" y="60.90" width="27.60" height="21.00" fill="#f6f61e"/><rect x="110.90" y="60.90" width="27.30" height="21.00" fill="#f6f61e"/><path d="M1.30,81.90V66.48M2.00,81.90V65.66M2.70,81.90V74.45M3.40,81.90V73.99M4.10,81.90V69.36M4.80,81.90V63.93M5.50,81.90V65.80M6.20,81.90V63.26M6.90,81.90V69.81M7.60,81.90V65.52M8.30,81.90V72.41M9.00,81.90V69.61M9.70,81.90V68.48M10.40,81.90V65.01M11.10,81.90V72.34M11.80,81.90V65.92M12.50,81.90V63.78M13.20,81.90V66.58M13.90,81.90V63.91M14.60,81.90V69.01M15.30,81.90V70.94M16.00,81.90V65.31M16.70,81.90V63.22M17.40,81.90V67.02M18.10,81.90V63.27M18.80,81.90V74.30M19.50,81.90V64.21M20.20,81.90V64.55M20.90,81.90V68.43M21.60,81.90V68.73M22.30,81.90V65.59M23.00,81.90V66.42M23.70,81.90V63.10M24.40,81.90V68.73M25.10,81.90V67.50M25.80,81.90V70.34M26.50,81.90V71.05M27.20,81.90V66.69M37.10,81.90V68.32M37.80,81.90V65.40M38.50,81.90V65.14M39.20,81.90V66.71M39.90,81.90V67.68M40.60,81.90V64.77M41.30,81.90V69.25M42.00,81.90V73.39M42.70,81.90V65.29M43.40,81.90V66.25M44.10,81.90V68.98M44.80,81.90V69.36M45.50,81.90V63.52M46.20,81.90V66.10M46.90,81.90V64.70M47.60,81.90V68.42M48.30,81.90V68.86M49.00,81.90V73.80M49.70,81.90V68.49M50.40,81.90V64.44M51.10,81.90V71.15M51.80,81.90V70.02M52.50,81.90V64.46M53.20,81.90V64.51M53.90,81.90V67.06M54.60,81.90V65.64M55.30,81.90V64.51M56.00,81.90V66.29M56.70,81.90V72.03M57.40,81.90V69.18M58.10,81.90V64.98M58.80,81.90V64.96M59.50,81.90V64.56M60.20,81.90V70.60M60.90,81.90V69.19M61.60,81.90V69.02M62.30,81.90V64.79M63.00,81.90V67.25M63.70,81.90V65.50M74.00,81.90V67.71M74.70,81.90V66.05M75.40,81.90V68.95M76.10,81.90V68.54M76.80,81.90V71.29M77.50,81.90V65.63M78.20,81.90V68.25M78.90,81.90V72.77M79.60,81.90V71.12M80.30,81.90V65.83M81.00,81.90V63.54M81.70,81.90V65.80M82.40,81.90V74.17M83.10,81.90V68.90M83.80,81.90V69.04M84.50,81.90V72.49M85.20,81.90V68.70M85.90,81.90V64.09M86.60,81.90V70.35M87.30,81.90V63.36M88.00,81.90V65.21M88.70,81.90V72.68M89.40,81.90V67.45M90.10,81.90V73.42M90.80,81.90V68.84M91.50,81.90V63.27M92.20,81.90V73.37M92.90,81.90V72.29M93.60,81.90V64.99M94.30,81.90V66.10M95.00,81.90V65.78M95.70,81.90V70.71M96.40,81.90V64.26M97.10,81.90V68.69M97.80,81.90V68.37M98.50,81.90V71.73M99.20,81.90V69.52M99.90,81.90V63.01M100.60,81.90V68.48M111.20,81.90V70.06M111.90,81.90V65.57M112.60,81.90V65.05M113.30,81.90V68.44M114.00,81.90V72.27M114.70,81.90V66.47M115.40,81.90V68.94M116.10,81.90V64.25M116.80,81.90V63.58M117.50,81.90V68.27M118.20,81.90V70.59M118.90,81.90V68.72M119.60,81.90V69.52M120.30,81.90V71.98M121.00,81.90V65.46M121.70,81.90V73.56M122.40,81.90V67.11M123.10,81.90V64.82M123.80,81.90V69.42M124.50,81.90V71.11M125.20,81.90V66.44M125.90,81.90V71.50M126.60,81.90V65.21M127.30,81.90V68.20M128.00,81.90V67.37M128.70,81.90V65.64M129.40,81.90V64.94M130.10,81.90V64.70M130.80,81.90V66.07M131.50,81.90V66.60M132.20,81.90V72.28M132.90,81.90V66.78M133.60,81.90V67.88M134.30,81.90V67.77M135.00,81.90V66.95M135.70,81.90V67.22M136.40,81.90V65.01M137.10,81.90V68.09M137.80,81.90V73.47" stroke="#000" stroke-width="0.95"/><path d="M2.70,75.90v5.19M3.40,75.02v2.04M8.30,72.47v2.97M11.10,73.18v4.63M13.90,75.05v2.42M16.00,73.46v4.38M17.40,71.05v3.85M18.80,74.71v5.74M19.50,76.84v3.25M23.00,70.72v4.76M27.20,74.07v3.70M39.90,75.10v5.00M41.30,76.32v5.98M42.00,77.42v3.71M42.70,75.60v5.69M46.20,70.14v2.23M47.60,73.28v4.36M49.00,77.47v4.33M51.10,75.87v1.72M53.20,69.84v4.27M56.70,75.44v3.64M61.60,73.53v3.33M77.50,70.59v1.67M86.60,74.80v1.85M87.30,69.46v5.68M88.00,68.87v4.62M91.50,69.51v1.65M98.50,76.70v1.91M99.20,71.13v4.93M100.60,72.95v3.06M115.40,70.71v2.68M120.30,74.53v5.48M121.70,74.18v2.61M122.40,71.45v2.35M123.10,77.16v1.96M124.50,75.19v1.98M125.20,72.09v5.06M135.70,75.54v5.73" stroke="#b0b020" stroke-width="0.55"/><rect x="0" y="0" width="1.1" height="83.70" fill="#19d419"/><rect x="0" y="81.80" width="147.9" height="1.9" fill="#19d419"/></svg>
<div style="left:221.9px;top:77.80px;height:8px;line-height:8px;font-size:4.9px;color:#2ee02e;white-space:nowrap;transform:scaleX(0.885);transform-origin:left;-webkit-text-stroke:0.15px #2ee02e;">Frame Start Offset : 496.985254002 ds</div>
<div style="left:221.9px;top:86.60px;height:5px;line-height:5px;font-size:4.8px;color:#8a8a8a;white-space:nowrap;-webkit-text-stroke:0.15px #8a8a8a;background:#000;padding-right:0.6px">0 dBm</div>
<div style="left:221.9px;top:100.30px;height:5px;line-height:5px;font-size:4.8px;color:#8a8a8a;white-space:nowrap;-webkit-text-stroke:0.15px #8a8a8a;background:#000;padding-right:0.6px">-20 dBm</div>
<div style="left:221.9px;top:114.00px;height:5px;line-height:5px;font-size:4.8px;color:#8c8c6a;white-space:nowrap;-webkit-text-stroke:0.15px #8c8c6a;">-40 dBm</div>
<div style="left:221.9px;top:127.90px;height:5px;line-height:5px;font-size:4.8px;color:#8c8c6a;white-space:nowrap;-webkit-text-stroke:0.15px #8c8c6a;">-60 dBm</div>
<div style="left:221.9px;top:141.70px;height:5px;line-height:5px;font-size:4.8px;color:#8c8c6a;white-space:nowrap;-webkit-text-stroke:0.15px #8c8c6a;">-80 dBm</div>
<div style="left:221.9px;top:154.50px;height:5px;line-height:5px;font-size:4.8px;color:#8c8c6a;white-space:nowrap;-webkit-text-stroke:0.15px #8c8c6a;">-100 dBm</div>
<div style="left:221.1px;top:161.10px;height:8px;line-height:8px;font-size:4.8px;color:#e0e0e0;white-space:nowrap;-webkit-text-stroke:0.15px #e0e0e0;">0.0 ms</div>
<div style="left:143.55px;width:300px;text-align:center;top:161.10px;height:8px;line-height:8px;font-size:4.8px;color:#e0e0e0;white-space:nowrap;-webkit-text-stroke:0.15px #e0e0e0;">2.01 ms/</div>
<div style="right:376.5px;text-align:right;top:161.10px;height:8px;line-height:8px;font-size:4.8px;color:#e0e0e0;white-space:nowrap;-webkit-text-stroke:0.15px #e0e0e0;">20.1 ms</div>
<div style="left:217.8px;top:70.3px;width:1.799999999999983px;height:96.7px;background:#f4f4f4;"></div>
<div style="left:370.2px;top:52.8px;width:298.09999999999997px;height:7.0px;background:#2b3035;"></div>
<svg style="position:absolute;left:373.4px;top:54.4px" width="5.0" height="5.0" viewBox="0 0 5.0 5.0"><rect x="0.6" y="0.9" width="1.5" height="1.5" fill="#d8d8d8"/><path d="M1.6,1.9 L3.6,3.9" stroke="#d8d8d8" stroke-width="0.8"/><rect x="2.9" y="3.0" width="1.4" height="1.6" fill="#d8d8d8"/></svg>
<div style="left:379.8px;top:53.10px;height:8px;line-height:8px;font-size:5.1px;color:#e6e6e6;white-space:nowrap;transform:scaleX(0.92);transform-origin:left;-webkit-text-stroke:0.15px #e6e6e6;">NR5G_VSA_DL: 3 EVM vs Carrier</div>
<svg style="position:absolute;left:653.5px;top:53.599999999999994px" width="7.0" height="7.0" viewBox="0 0 7.0 7.0"><path d="M2.2,2.2 V1.4 Q2.2,0.7 2.9,0.7 H5.6 Q6.3,0.7 6.3,1.4 V3.6 Q6.3,4.3 5.6,4.3 H4.9" fill="none" stroke="#d0d0d0" stroke-width="0.9"/><rect x="0.9" y="2.5" width="4" height="3.6" rx="0.9" fill="none" stroke="#d0d0d0" stroke-width="1.1"/></svg>
<svg style="position:absolute;left:661.8px;top:53.0px" width="6.0" height="7.0" viewBox="0 0 6.0 7.0"><rect x="0.5" y="0.8" width="5" height="1" fill="#d0d0d0"/><path d="M1,2.3 L5,2.3 L4.6,6.6 L1.4,6.6 Z" fill="#d0d0d0"/></svg>
<div style="left:370.2px;top:59.8px;width:298.09999999999997px;height:7.5px;background:#eff1f3;"></div>
<div style="left:371.09999999999997px;top:60.099999999999994px;width:12.699999999999989px;height:7.299999999999997px;background:#57565a;"></div>
<div style="left:227.45px;width:300px;text-align:center;top:60.60px;height:8px;line-height:8px;font-size:4.9px;color:#8e9194;white-space:nowrap;transform:scaleX(0.95);transform-origin:center;-webkit-text-stroke:0.15px #8e9194;">All</div>
<div style="left:384.49999999999994px;top:60.099999999999994px;width:22.19999999999999px;height:7.299999999999997px;background:#dadde0;"></div>
<div style="left:245.59999999999997px;width:300px;text-align:center;top:60.60px;height:8px;line-height:8px;font-size:4.9px;color:#a9acaf;white-space:nowrap;transform:scaleX(0.95);transform-origin:center;-webkit-text-stroke:0.15px #a9acaf;">View1</div>
<div style="left:407.3999999999999px;top:60.099999999999994px;width:19.80000000000001px;height:7.299999999999997px;background:#dadde0;"></div>
<div style="left:267.2999999999999px;width:300px;text-align:center;top:60.60px;height:8px;line-height:8px;font-size:4.9px;color:#a9acaf;white-space:nowrap;transform:scaleX(0.95);transform-origin:center;-webkit-text-stroke:0.15px #a9acaf;">View2</div>
<div style="left:370.2px;top:67.3px;width:298.09999999999997px;height:1.0px;background:#a9adb1;"></div>
<div style="left:370.2px;top:68.3px;width:298.09999999999997px;height:2.0px;background:#74787c;"></div>
<div style="left:370.8px;top:70.3px;width:147.49999999999994px;height:6.299999999999997px;background:#2b3035;"></div>
<div style="left:372.3px;top:69.55px;height:8px;line-height:8px;font-size:5.3px;color:#e8e8e8;white-space:nowrap;transform:scaleX(0.87);transform-origin:left;-webkit-text-stroke:0.15px #e8e8e8;">3.1 Src2 F1</div>
<div style="right:225.70000000000005px;text-align:right;top:69.55px;height:8px;line-height:8px;font-size:5.9px;color:#e8e8e8;white-space:nowrap;transform:scaleX(0.84);transform-origin:right;-webkit-text-stroke:0.15px #e8e8e8;">3 Max</div>
<svg style="position:absolute;left:494.20496687499997px;top:70.94999999999999px" width="6.0" height="6.0" viewBox="0 0 6.0 6.0"><circle cx="2.7" cy="2.7" r="1.85" fill="#2fd32f" stroke="#111" stroke-width="0.4"/></svg>
<div style="right:245.99503312500002px;text-align:right;top:69.55px;height:8px;line-height:8px;font-size:5.9px;color:#e8e8e8;white-space:nowrap;transform:scaleX(0.84);transform-origin:right;-webkit-text-stroke:0.15px #e8e8e8;">2 Min</div>
<svg style="position:absolute;left:475.2867725px;top:70.94999999999999px" width="6.0" height="6.0" viewBox="0 0 6.0 6.0"><circle cx="2.7" cy="2.7" r="1.85" fill="#3a8ef0" stroke="#111" stroke-width="0.4"/></svg>
<div style="right:264.9132275px;text-align:right;top:69.55px;height:8px;line-height:8px;font-size:5.9px;color:#e8e8e8;white-space:nowrap;transform:scaleX(0.84);transform-origin:right;-webkit-text-stroke:0.15px #e8e8e8;">1 Avg</div>
<svg style="position:absolute;left:456.1773075px;top:70.94999999999999px" width="6.0" height="6.0" viewBox="0 0 6.0 6.0"><circle cx="2.7" cy="2.7" r="1.85" fill="#f5e63a" stroke="#111" stroke-width="0.4"/></svg>
<div style="left:520px;top:70.3px;width:148.29999999999995px;height:6.299999999999997px;background:#2b3035;"></div>
<div style="left:521.5px;top:69.55px;height:8px;line-height:8px;font-size:5.3px;color:#e8e8e8;white-space:nowrap;transform:scaleX(0.87);transform-origin:left;-webkit-text-stroke:0.15px #e8e8e8;">3.2 Src1 F1</div>
<div style="right:75.70000000000005px;text-align:right;top:69.55px;height:8px;line-height:8px;font-size:5.9px;color:#e8e8e8;white-space:nowrap;transform:scaleX(0.84);transform-origin:right;-webkit-text-stroke:0.15px #e8e8e8;">3 Max</div>
<svg style="position:absolute;left:644.204966875px;top:70.94999999999999px" width="6.0" height="6.0" viewBox="0 0 6.0 6.0"><circle cx="2.7" cy="2.7" r="1.85" fill="#2fd32f" stroke="#111" stroke-width="0.4"/></svg>
<div style="right:95.99503312500008px;text-align:right;top:69.55px;height:8px;line-height:8px;font-size:5.9px;color:#e8e8e8;white-space:nowrap;transform:scaleX(0.84);transform-origin:right;-webkit-text-stroke:0.15px #e8e8e8;">2 Min</div>
<svg style="position:absolute;left:625.2867724999999px;top:70.94999999999999px" width="6.0" height="6.0" viewBox="0 0 6.0 6.0"><circle cx="2.7" cy="2.7" r="1.85" fill="#3a8ef0" stroke="#111" stroke-width="0.4"/></svg>
<div style="right:114.91322750000018px;text-align:right;top:69.55px;height:8px;line-height:8px;font-size:5.9px;color:#e8e8e8;white-space:nowrap;transform:scaleX(0.84);transform-origin:right;-webkit-text-stroke:0.15px #e8e8e8;">1 Avg</div>
<svg style="position:absolute;left:606.1773074999999px;top:70.94999999999999px" width="6.0" height="6.0" viewBox="0 0 6.0 6.0"><circle cx="2.7" cy="2.7" r="1.85" fill="#f5e63a" stroke="#111" stroke-width="0.4"/></svg>
<div style="left:370.8px;top:76.5px;width:147.49999999999994px;height:90.5px;background:#000;"></div>
<svg style="position:absolute;left:370.8px;top:76.5px" width="147.49999999999994" height="90.5" viewBox="0 0 147.49999999999994 90.5"><line x1="14.75" y1="0" x2="14.75" y2="90.5" stroke="#363636" stroke-width="0.9"/><line x1="29.50" y1="0" x2="29.50" y2="90.5" stroke="#363636" stroke-width="0.9"/><line x1="44.25" y1="0" x2="44.25" y2="90.5" stroke="#363636" stroke-width="0.9"/><line x1="59.00" y1="0" x2="59.00" y2="90.5" stroke="#363636" stroke-width="0.9"/><line x1="73.75" y1="0" x2="73.75" y2="90.5" stroke="#363636" stroke-width="0.9"/><line x1="88.50" y1="0" x2="88.50" y2="90.5" stroke="#363636" stroke-width="0.9"/><line x1="103.25" y1="0" x2="103.25" y2="90.5" stroke="#363636" stroke-width="0.9"/><line x1="118.00" y1="0" x2="118.00" y2="90.5" stroke="#363636" stroke-width="0.9"/><line x1="132.75" y1="0" x2="132.75" y2="90.5" stroke="#363636" stroke-width="0.9"/><line x1="0" y1="0.70" x2="147.49999999999994" y2="0.70" stroke="#363636" stroke-width="0.9"/><line x1="0" y1="21.50" x2="147.49999999999994" y2="21.50" stroke="#363636" stroke-width="0.9"/><line x1="0" y1="42.10" x2="147.49999999999994" y2="42.10" stroke="#363636" stroke-width="0.9"/><line x1="0" y1="62.70" x2="147.49999999999994" y2="62.70" stroke="#363636" stroke-width="0.9"/><line x1="0" y1="82.90" x2="147.49999999999994" y2="82.90" stroke="#363636" stroke-width="0.9"/><path d="M3.80,48.11V56.39M7.30,49.41V55.71M11.80,52.90V57.09M14.80,51.32V56.70M23.80,51.52V55.60M24.80,47.25V57.46M30.80,47.85V55.93M35.80,47.86V54.60M43.80,50.66V52.62M77.80,48.38V54.72M88.80,46.05V54.83M91.30,42.28V51.78M92.30,46.06V55.05M100.80,46.98V52.59M107.80,45.41V50.41M113.80,44.68V48.68M116.80,39.04V50.56M118.80,39.48V51.25M124.80,39.62V49.92M130.80,43.76V51.51M137.80,40.65V47.99M146.80,42.76V48.19" stroke="#2ee42e" stroke-width="0.6"/><path d="M0.30,57.22V64.62M0.80,58.40V64.30M1.30,58.50V64.56M1.80,58.55V64.42M2.30,56.36V64.42M2.80,56.52V64.47M3.30,56.91V64.57M3.80,56.39V64.74M4.30,58.44V64.85M4.80,57.28V64.32M5.30,56.55V64.79M5.80,55.47V64.53M6.30,57.05V64.07M6.80,55.60V63.99M7.30,55.71V64.32M7.80,57.34V64.74M8.30,56.38V64.17M8.80,56.92V64.32M9.30,57.12V64.36M9.80,58.79V64.22M10.30,56.77V64.50M10.80,55.22V63.83M11.30,57.22V64.19M11.80,57.09V63.94M12.30,56.87V64.03M12.80,57.66V64.35M13.30,57.94V64.04M13.80,56.24V64.04M14.30,56.58V63.42M14.80,56.70V63.95M15.30,56.06V63.42M15.80,57.85V63.84M16.30,54.62V63.55M16.80,55.12V63.92M17.30,54.65V63.49M17.80,56.49V63.65M18.30,56.32V63.62M18.80,58.02V63.81M19.30,55.52V63.79M19.80,55.37V63.87M20.30,55.63V63.38M20.80,55.77V63.19M21.30,57.37V63.56M21.80,57.13V63.91M22.30,55.84V63.45M22.80,55.01V63.53M23.30,57.59V63.21M23.80,55.60V63.03M24.30,56.51V63.80M24.80,57.46V63.36M25.30,54.00V63.09M25.80,55.73V63.41M26.30,55.25V63.45M26.80,56.04V63.06M27.30,55.07V62.76M27.80,55.57V63.55M28.30,57.04V63.33M28.80,55.53V62.74M29.30,56.35V63.04M29.80,55.00V62.96M30.30,55.62V63.13M30.80,55.93V62.55M31.30,56.29V62.72M31.80,52.99V62.54M32.30,52.53V62.62M32.80,55.95V62.11M33.30,54.66V62.12M33.80,54.12V62.51M34.30,54.10V62.77M34.80,56.11V62.58M35.30,55.08V62.66M35.80,54.60V62.03M36.30,53.52V61.79M36.80,53.20V62.53M37.30,54.59V62.27M37.80,53.52V62.22M38.30,55.08V61.94M38.80,55.65V62.25M39.30,55.32V61.93M39.80,53.84V61.86M40.30,54.81V61.79M40.80,55.49V62.32M41.30,55.32V62.40M41.80,52.74V62.30M42.30,54.87V62.19M42.80,54.37V62.09M43.30,54.86V62.14M43.80,52.62V62.00M44.30,54.12V62.17M44.80,54.49V62.35M45.30,55.10V62.23M45.80,53.96V62.64M46.30,54.67V62.53M46.80,53.49V62.56M47.30,53.78V62.38M47.80,54.25V61.87M48.30,54.82V62.39M48.80,55.60V62.03M49.30,54.24V62.68M49.80,53.21V62.13M50.30,54.81V62.36M50.80,53.74V62.27M51.30,53.52V62.35M51.80,55.20V62.76M52.30,53.75V62.31M52.80,55.45V62.50M53.30,53.60V62.46M53.80,53.61V62.59M54.30,54.58V62.41M54.80,55.05V63.12M55.30,54.94V62.65M55.80,54.14V62.51M56.30,54.28V62.81M56.80,54.50V63.08M57.30,55.03V62.84M57.80,55.82V62.60M58.30,52.89V62.76M58.80,55.47V62.90M59.30,53.34V62.75M59.80,55.66V63.55M60.30,53.46V63.21M60.80,55.09V63.66M61.30,56.56V63.43M61.80,53.92V63.13M62.30,56.04V63.58M62.80,55.55V63.03M63.30,54.85V63.06M63.80,53.58V63.07M64.30,53.64V63.03M64.80,54.53V63.08M65.30,55.76V63.75M65.80,55.32V63.44M66.30,54.09V63.77M66.80,53.87V63.78M67.30,53.65V63.19M67.80,55.69V63.67M68.30,54.83V63.38M68.80,53.50V64.12M69.30,54.68V63.32M69.80,55.37V63.86M70.30,54.92V63.82M70.80,55.20V63.41M71.30,56.40V63.82M71.80,53.56V63.73M72.30,56.77V63.99M72.80,54.65V63.56M73.30,53.00V63.91M73.80,54.63V63.66M74.30,54.40V63.39M74.80,56.54V63.95M75.30,56.27V64.06M75.80,55.64V63.95M76.30,55.21V64.09M76.80,56.26V63.71M77.30,55.66V64.06M77.80,54.72V63.57M78.30,56.03V63.23M78.80,53.86V64.01M79.30,55.22V63.67M79.80,56.42V63.67M80.30,55.11V63.50M80.80,56.21V63.27M81.30,56.08V63.39M81.80,53.28V63.32M82.30,52.60V63.07M82.80,54.68V62.93M83.30,55.54V63.15M83.80,54.36V63.12M84.30,54.59V63.07M84.80,52.15V62.62M85.30,55.48V62.60M85.80,53.49V62.61M86.30,54.39V62.79M86.80,53.96V62.32M87.30,55.77V62.87M87.80,52.92V62.07M88.30,54.21V62.71M88.80,54.83V62.40M89.30,53.11V62.49M89.80,52.63V61.85M90.30,54.21V62.25M90.80,51.90V61.97M91.30,51.78V61.52M91.80,52.17V61.44M92.30,55.05V62.10M92.80,51.08V61.17M93.30,52.90V61.76M93.80,53.24V61.83M94.30,51.84V61.48M94.80,50.99V61.55M95.30,52.98V61.76M95.80,52.07V61.07M96.30,51.47V60.84M96.80,51.15V60.76M97.30,51.20V61.07M97.80,52.22V60.91M98.30,51.71V61.11M98.80,52.66V61.40M99.30,51.12V61.46M99.80,52.29V60.74M100.30,51.37V61.55M100.80,52.59V61.12M101.30,52.89V60.70M101.80,51.45V60.73M102.30,52.48V60.97M102.80,51.24V61.22M103.30,51.83V60.96M103.80,51.55V61.06M104.30,50.32V61.36M104.80,52.26V61.34M105.30,50.64V60.69M105.80,52.97V61.01M106.30,52.75V61.34M106.80,51.94V61.04M107.30,53.04V61.30M107.80,50.41V60.95M108.30,51.43V60.86M108.80,49.21V61.20M109.30,49.13V60.51M109.80,51.45V61.05M110.30,50.81V60.61M110.80,50.32V60.64M111.30,49.88V60.67M111.80,51.53V60.72M112.30,49.36V60.73M112.80,51.87V60.59M113.30,51.15V61.08M113.80,48.68V60.83M114.30,49.66V60.49M114.80,51.14V60.96M115.30,50.12V60.35M115.80,49.94V60.97M116.30,50.23V60.30M116.80,50.56V60.29M117.30,50.94V60.88M117.80,51.33V60.62M118.30,49.91V60.84M118.80,51.25V60.86M119.30,52.01V60.48M119.80,46.78V60.30M120.30,50.07V60.79M120.80,48.33V60.23M121.30,49.17V60.82M121.80,46.31V60.33M122.30,50.48V60.27M122.80,50.78V60.69M123.30,50.39V60.42M123.80,52.13V60.76M124.30,49.82V60.35M124.80,49.92V60.45M125.30,49.91V60.37M125.80,50.15V60.90M126.30,49.69V60.04M126.80,49.01V60.12M127.30,50.86V60.62M127.80,49.01V60.58M128.30,51.13V60.88M128.80,50.09V60.79M129.30,50.28V60.78M129.80,48.73V60.46M130.30,49.72V60.82M130.80,51.51V60.73M131.30,48.86V60.79M131.80,47.75V60.14M132.30,49.15V60.46M132.80,49.32V60.47M133.30,50.87V60.54M133.80,48.74V60.32M134.30,49.34V60.38M134.80,49.63V60.10M135.30,48.83V59.89M135.80,49.30V60.27M136.30,48.98V59.86M136.80,49.16V60.44M137.30,48.92V59.93M137.80,47.99V60.54M138.30,49.36V60.05M138.80,48.86V59.92M139.30,48.19V60.06M139.80,48.98V60.05M140.30,46.65V59.87M140.80,49.48V59.87M141.30,48.10V59.78M141.80,48.25V60.18M142.30,48.01V60.08M142.80,49.02V59.59M143.30,49.50V60.21M143.80,46.92V60.12M144.30,49.94V60.23M144.80,49.53V59.88M145.30,50.31V60.04M145.80,48.31V59.57M146.30,46.96V59.51M146.80,48.19V59.67M147.30,48.91V59.66" stroke="#38ec38" stroke-width="0.7"/><path d="M3.30,58.30v1.02M4.30,58.49v1.93M9.30,60.20v1.49M9.80,61.95v1.45M10.80,56.42v0.65M18.80,60.32v1.55M20.30,55.89v2.00M20.80,55.95v1.99M21.80,57.53v0.67M25.30,57.17v0.74M26.30,57.80v0.82M27.80,60.93v0.68M30.80,57.65v1.43M32.30,54.00v0.74M32.80,58.44v1.41M33.30,57.36v1.30M36.80,58.18v0.98M38.30,57.73v1.78M40.30,56.74v1.22M41.80,58.53v1.42M43.30,57.90v1.41M43.80,55.77v1.87M46.80,55.54v1.32M47.30,56.50v1.70M48.80,56.35v1.33M52.30,57.25v1.14M52.80,55.63v1.53M54.80,59.73v1.14M55.80,54.56v1.04M58.30,56.32v1.56M58.80,56.79v0.76M60.30,58.91v1.73M60.80,57.44v1.18M62.80,57.09v0.88M63.30,55.30v0.62M63.80,57.24v1.21M64.80,58.71v1.78M66.80,54.18v1.22M69.80,56.59v1.55M72.30,61.78v1.39M72.80,56.72v1.59M73.80,57.25v1.63M78.30,58.63v0.97M80.80,56.25v1.82M82.30,56.71v1.86M82.80,58.45v1.81M84.30,58.65v1.07M86.80,56.99v1.52M87.30,56.46v0.68M87.80,58.19v1.89M89.30,55.04v1.21M89.80,58.86v1.82M90.80,59.03v1.10M91.30,52.65v1.96M92.80,55.02v0.79M93.80,53.69v0.66M95.30,59.74v0.61M95.80,52.88v1.78M104.80,57.07v1.38M105.30,51.35v1.65M106.30,59.27v0.98M107.80,58.26v1.38M109.30,57.78v1.39M110.80,56.11v0.66M111.80,55.45v0.73M112.30,58.01v1.99M113.30,53.30v1.85M114.30,50.27v1.38M115.80,57.88v0.76M120.30,55.52v1.78M120.80,56.53v1.91M121.80,57.95v1.70M123.80,57.52v1.19M129.30,53.62v1.65M130.30,54.95v1.76M131.80,49.87v1.87M137.30,50.84v0.91M137.80,56.84v1.06M138.80,56.47v1.73M140.30,51.74v1.56M140.80,55.65v1.32M141.80,56.82v1.61M142.30,51.59v1.86M143.30,54.41v1.31M144.80,52.23v1.47M146.80,56.80v1.44" stroke="#128a12" stroke-width="0.45"/><path d="M0.30,65.52V72.88M0.80,65.20V70.63M1.30,65.46V73.03M1.80,65.32V73.14M2.30,65.32V72.22M2.80,65.37V72.55M3.30,65.47V70.81M3.80,65.64V73.39M4.30,65.75V72.78M4.80,65.22V71.19M5.30,65.69V72.51M5.80,65.43V71.82M6.30,64.97V71.55M6.80,64.89V70.55M7.30,65.22V71.43M7.80,65.64V71.13M8.30,65.07V71.55M8.80,65.22V73.05M9.30,65.26V71.63M9.80,65.12V70.57M10.30,65.40V72.02M10.80,64.73V70.65M11.30,65.09V72.60M11.80,64.84V70.33M12.30,64.93V70.30M12.80,65.25V70.89M13.30,64.94V70.36M13.80,64.94V70.99M14.30,64.32V71.12M14.80,64.85V70.34M15.30,64.32V69.66M15.80,64.74V71.32M16.30,64.45V70.58M16.80,64.82V72.50M17.30,64.39V71.47M17.80,64.55V70.12M18.30,64.52V71.86M18.80,64.71V73.25M19.30,64.69V71.32M19.80,64.77V70.29M20.30,64.28V70.55M20.80,64.09V70.79M21.30,64.46V71.21M21.80,64.81V70.33M22.30,64.35V69.92M22.80,64.43V70.30M23.30,64.11V70.71M23.80,63.93V71.18M24.30,64.70V71.79M24.80,64.26V70.33M25.30,63.99V71.47M25.80,64.31V71.82M26.30,64.35V71.88M26.80,63.96V69.33M27.30,63.66V69.80M27.80,64.45V70.04M28.30,64.23V69.60M28.80,63.64V69.62M29.30,63.94V70.18M29.80,63.86V70.07M30.30,64.03V69.34M30.80,63.45V69.92M31.30,63.62V71.43M31.80,63.44V69.81M32.30,63.52V69.29M32.80,63.01V69.19M33.30,63.02V68.74M33.80,63.41V70.17M34.30,63.67V70.26M34.80,63.48V70.05M35.30,63.56V69.24M35.80,62.93V69.22M36.30,62.69V68.45M36.80,63.43V69.16M37.30,63.17V68.66M37.80,63.12V68.52M38.30,62.84V69.15M38.80,63.15V69.95M39.30,62.83V69.78M39.80,62.76V68.13M40.30,62.69V69.08M40.80,63.22V69.63M41.30,63.30V70.90M41.80,63.20V70.53M42.30,63.09V71.17M42.80,62.99V69.64M43.30,63.04V69.43M43.80,62.90V71.20M44.30,63.07V70.09M44.80,63.25V70.02M45.30,63.13V69.43M45.80,63.54V69.56M46.30,63.43V72.26M46.80,63.46V69.70M47.30,63.28V68.66M47.80,62.77V69.63M48.30,63.29V69.97M48.80,62.93V68.89M49.30,63.58V69.06M49.80,63.03V70.11M50.30,63.26V69.73M50.80,63.17V69.63M51.30,63.25V68.96M51.80,63.66V71.62M52.30,63.21V70.25M52.80,63.40V69.76M53.30,63.36V69.75M53.80,63.49V72.11M54.30,63.31V71.61M54.80,64.02V69.46M55.30,63.55V69.30M55.80,63.41V69.97M56.30,63.71V71.87M56.80,63.98V70.35M57.30,63.74V69.67M57.80,63.50V69.59M58.30,63.66V69.91M58.80,63.80V70.62M59.30,63.65V70.39M59.80,64.45V72.38M60.30,64.11V71.12M60.80,64.56V70.15M61.30,64.33V71.31M61.80,64.03V70.73M62.30,64.48V71.42M62.80,63.93V69.96M63.30,63.96V69.52M63.80,63.97V69.49M64.30,63.93V70.78M64.80,63.98V70.27M65.30,64.65V72.35M65.80,64.34V70.05M66.30,64.67V70.53M66.80,64.68V71.28M67.30,64.09V71.33M67.80,64.57V71.15M68.30,64.28V70.21M68.80,65.02V73.16M69.30,64.22V70.26M69.80,64.76V72.49M70.30,64.72V70.36M70.80,64.31V70.24M71.30,64.72V70.32M71.80,64.63V70.62M72.30,64.89V71.41M72.80,64.46V69.94M73.30,64.81V71.31M73.80,64.56V72.23M74.30,64.29V70.62M74.80,64.85V71.58M75.30,64.96V70.65M75.80,64.85V70.22M76.30,64.99V70.49M76.80,64.61V71.07M77.30,64.96V70.49M77.80,64.47V69.84M78.30,64.13V70.41M78.80,64.91V70.59M79.30,64.57V70.74M79.80,64.57V72.15M80.30,64.40V70.17M80.80,64.17V70.77M81.30,64.29V70.05M81.80,64.22V72.18M82.30,63.97V70.50M82.80,63.83V70.51M83.30,64.05V72.01M83.80,64.02V70.53M84.30,63.97V69.79M84.80,63.52V69.09M85.30,63.50V69.45M85.80,63.51V69.75M86.30,63.69V70.18M86.80,63.22V68.79M87.30,63.77V69.68M87.80,62.97V68.86M88.30,63.61V69.88M88.80,63.30V69.72M89.30,63.39V69.40M89.80,62.75V69.83M90.30,63.15V69.85M90.80,62.87V69.55M91.30,62.42V67.76M91.80,62.34V68.32M92.30,63.00V70.77M92.80,62.07V70.00M93.30,62.66V68.81M93.80,62.73V68.89M94.30,62.38V67.82M94.80,62.45V69.33M95.30,62.66V68.90M95.80,61.97V67.99M96.30,61.74V68.84M96.80,61.66V68.29M97.30,61.97V68.33M97.80,61.81V70.16M98.30,62.01V69.81M98.80,62.30V69.90M99.30,62.36V68.03M99.80,61.64V68.55M100.30,62.45V68.25M100.80,62.02V68.24M101.30,61.60V68.00M101.80,61.63V67.65M102.30,61.87V67.65M102.80,62.12V68.52M103.30,61.86V67.63M103.80,61.96V67.58M104.30,62.26V68.05M104.80,62.24V68.96M105.30,61.59V68.09M105.80,61.91V68.57M106.30,62.24V69.00M106.80,61.94V67.46M107.30,62.20V67.94M107.80,61.85V69.03M108.30,61.76V68.07M108.80,62.10V68.32M109.30,61.41V67.53M109.80,61.95V68.17M110.30,61.51V68.19M110.80,61.54V67.58M111.30,61.57V69.41M111.80,61.62V68.29M112.30,61.63V68.66M112.80,61.49V68.43M113.30,61.98V67.44M113.80,61.73V69.82M114.30,61.39V68.91M114.80,61.86V67.25M115.30,61.25V67.63M115.80,61.87V67.27M116.30,61.20V67.99M116.80,61.19V67.69M117.30,61.78V68.01M117.80,61.52V67.19M118.30,61.74V67.44M118.80,61.76V68.50M119.30,61.38V68.95M119.80,61.20V67.22M120.30,61.69V68.98M120.80,61.13V68.47M121.30,61.72V67.83M121.80,61.23V67.20M122.30,61.17V66.74M122.80,61.59V69.33M123.30,61.32V68.80M123.80,61.66V66.98M124.30,61.25V68.70M124.80,61.35V67.31M125.30,61.27V67.80M125.80,61.80V67.17M126.30,60.94V66.76M126.80,61.02V67.60M127.30,61.52V67.89M127.80,61.48V67.08M128.30,61.78V68.91M128.80,61.69V67.37M129.30,61.68V67.94M129.80,61.36V66.93M130.30,61.72V68.07M130.80,61.63V67.78M131.30,61.69V68.10M131.80,61.04V68.71M132.30,61.36V67.40M132.80,61.37V67.98M133.30,61.44V68.35M133.80,61.22V67.82M134.30,61.28V67.96M134.80,61.00V67.55M135.30,60.79V66.67M135.80,61.17V66.97M136.30,60.76V67.71M136.80,61.34V67.16M137.30,60.83V67.71M137.80,61.44V68.42M138.30,60.95V66.62M138.80,60.82V68.56M139.30,60.96V67.02M139.80,60.95V69.04M140.30,60.77V66.76M140.80,60.77V66.72M141.30,60.68V69.57M141.80,61.08V66.74M142.30,60.98V66.68M142.80,60.49V67.79M143.30,61.11V67.07M143.80,61.02V66.50M144.30,61.13V66.51M144.80,60.78V67.19M145.30,60.94V69.28M145.80,60.47V66.27M146.30,60.41V66.24M146.80,60.57V67.34M147.30,60.56V68.39" stroke="#2f84f6" stroke-width="0.7"/><path d="M0.30,71.80v0.86M1.30,70.95v0.89M2.80,68.38v0.75M4.30,67.35v0.64M4.80,69.77v1.11M5.80,67.13v0.99M7.80,69.18v1.13M8.30,68.07v0.92M8.80,69.22v1.47M9.30,69.45v1.39M11.30,68.47v0.82M12.80,66.40v0.50M13.30,68.43v0.74M16.30,69.48v1.20M16.80,68.31v1.39M17.30,66.80v0.92M18.30,66.07v1.05M18.80,67.45v1.25M19.80,66.49v1.20M20.30,68.02v1.29M22.30,68.78v0.76M22.80,69.17v1.49M24.30,67.08v0.62M24.80,65.50v1.43M25.80,66.61v0.56M27.30,65.58v0.86M27.80,68.96v0.52M28.30,66.75v1.41M28.80,65.05v0.59M29.80,68.29v0.84M33.30,65.59v0.64M37.30,66.47v0.62M37.80,64.63v0.63M39.30,65.64v1.36M40.30,64.76v1.46M42.80,67.67v1.35M46.30,70.55v1.19M46.80,65.31v1.13M51.80,65.77v0.86M52.30,64.92v1.33M52.80,67.51v0.59M53.30,65.97v1.22M54.30,68.18v0.71M55.80,67.70v0.78M56.30,64.99v1.18M57.80,65.84v1.14M58.30,68.22v1.28M58.80,69.21v1.25M59.30,69.15v0.92M59.80,69.62v0.93M60.80,66.14v1.21M64.30,66.20v0.64M64.80,68.37v1.33M66.30,67.96v0.58M68.30,66.62v0.96M69.80,69.58v0.87M70.30,68.97v1.05M71.30,67.25v0.57M72.30,69.42v0.56M74.80,66.05v0.61M75.30,69.20v1.04M76.80,67.15v0.72M81.80,68.72v1.49M82.30,65.18v0.66M82.80,68.29v1.46M83.30,68.30v1.38M84.80,66.75v1.22M85.80,67.68v0.76M87.80,67.02v0.74M88.30,68.47v0.61M89.30,67.46v1.14M91.30,65.91v0.60M92.30,66.54v0.60M92.80,67.17v0.65M93.30,64.63v1.47M96.80,65.62v1.24M97.30,65.75v1.04M99.30,64.01v0.75M100.30,66.06v0.87M102.80,67.40v1.21M105.30,65.69v1.21M106.30,64.53v1.36M108.80,64.99v1.14M110.80,63.55v1.08M111.30,67.26v1.48M113.30,66.18v0.53M115.30,66.38v0.83M116.30,64.19v0.70M117.30,63.00v0.89M118.30,65.07v1.19M119.30,63.24v0.70M120.30,66.51v0.85M124.30,63.80v1.20M124.80,63.50v1.46M129.30,65.95v0.79M130.30,63.41v1.02M131.30,64.68v0.61M132.80,65.31v0.76M133.30,63.71v0.57M133.80,65.22v1.47M134.30,64.18v1.31M137.80,63.88v0.56M138.30,64.30v0.84M138.80,66.31v0.53M140.80,64.58v0.70M141.80,63.45v0.66M143.30,62.29v1.41M144.30,64.95v1.29M147.30,62.19v1.48" stroke="#163e80" stroke-width="0.45"/><polyline points="0.30,64.62 0.80,64.30 1.30,64.56 1.80,64.42 2.30,64.42 2.80,64.47 3.30,64.57 3.80,64.74 4.30,64.85 4.80,64.32 5.30,64.79 5.80,64.53 6.30,64.07 6.80,63.99 7.30,64.32 7.80,64.74 8.30,64.17 8.80,64.32 9.30,64.36 9.80,64.22 10.30,64.50 10.80,63.83 11.30,64.19 11.80,63.94 12.30,64.03 12.80,64.35 13.30,64.04 13.80,64.04 14.30,63.42 14.80,63.95 15.30,63.42 15.80,63.84 16.30,63.55 16.80,63.92 17.30,63.49 17.80,63.65 18.30,63.62 18.80,63.81 19.30,63.79 19.80,63.87 20.30,63.38 20.80,63.19 21.30,63.56 21.80,63.91 22.30,63.45 22.80,63.53 23.30,63.21 23.80,63.03 24.30,63.80 24.80,63.36 25.30,63.09 25.80,63.41 26.30,63.45 26.80,63.06 27.30,62.76 27.80,63.55 28.30,63.33 28.80,62.74 29.30,63.04 29.80,62.96 30.30,63.13 30.80,62.55 31.30,62.72 31.80,62.54 32.30,62.62 32.80,62.11 33.30,62.12 33.80,62.51 34.30,62.77 34.80,62.58 35.30,62.66 35.80,62.03 36.30,61.79 36.80,62.53 37.30,62.27 37.80,62.22 38.30,61.94 38.80,62.25 39.30,61.93 39.80,61.86 40.30,61.79 40.80,62.32 41.30,62.40 41.80,62.30 42.30,62.19 42.80,62.09 43.30,62.14 43.80,62.00 44.30,62.17 44.80,62.35 45.30,62.23 45.80,62.64 46.30,62.53 46.80,62.56 47.30,62.38 47.80,61.87 48.30,62.39 48.80,62.03 49.30,62.68 49.80,62.13 50.30,62.36 50.80,62.27 51.30,62.35 51.80,62.76 52.30,62.31 52.80,62.50 53.30,62.46 53.80,62.59 54.30,62.41 54.80,63.12 55.30,62.65 55.80,62.51 56.30,62.81 56.80,63.08 57.30,62.84 57.80,62.60 58.30,62.76 58.80,62.90 59.30,62.75 59.80,63.55 60.30,63.21 60.80,63.66 61.30,63.43 61.80,63.13 62.30,63.58 62.80,63.03 63.30,63.06 63.80,63.07 64.30,63.03 64.80,63.08 65.30,63.75 65.80,63.44 66.30,63.77 66.80,63.78 67.30,63.19 67.80,63.67 68.30,63.38 68.80,64.12 69.30,63.32 69.80,63.86 70.30,63.82 70.80,63.41 71.30,63.82 71.80,63.73 72.30,63.99 72.80,63.56 73.30,63.91 73.80,63.66 74.30,63.39 74.80,63.95 75.30,64.06 75.80,63.95 76.30,64.09 76.80,63.71 77.30,64.06 77.80,63.57 78.30,63.23 78.80,64.01 79.30,63.67 79.80,63.67 80.30,63.50 80.80,63.27 81.30,63.39 81.80,63.32 82.30,63.07 82.80,62.93 83.30,63.15 83.80,63.12 84.30,63.07 84.80,62.62 85.30,62.60 85.80,62.61 86.30,62.79 86.80,62.32 87.30,62.87 87.80,62.07 88.30,62.71 88.80,62.40 89.30,62.49 89.80,61.85 90.30,62.25 90.80,61.97 91.30,61.52 91.80,61.44 92.30,62.10 92.80,61.17 93.30,61.76 93.80,61.83 94.30,61.48 94.80,61.55 95.30,61.76 95.80,61.07 96.30,60.84 96.80,60.76 97.30,61.07 97.80,60.91 98.30,61.11 98.80,61.40 99.30,61.46 99.80,60.74 100.30,61.55 100.80,61.12 101.30,60.70 101.80,60.73 102.30,60.97 102.80,61.22 103.30,60.96 103.80,61.06 104.30,61.36 104.80,61.34 105.30,60.69 105.80,61.01 106.30,61.34 106.80,61.04 107.30,61.30 107.80,60.95 108.30,60.86 108.80,61.20 109.30,60.51 109.80,61.05 110.30,60.61 110.80,60.64 111.30,60.67 111.80,60.72 112.30,60.73 112.80,60.59 113.30,61.08 113.80,60.83 114.30,60.49 114.80,60.96 115.30,60.35 115.80,60.97 116.30,60.30 116.80,60.29 117.30,60.88 117.80,60.62 118.30,60.84 118.80,60.86 119.30,60.48 119.80,60.30 120.30,60.79 120.80,60.23 121.30,60.82 121.80,60.33 122.30,60.27 122.80,60.69 123.30,60.42 123.80,60.76 124.30,60.35 124.80,60.45 125.30,60.37 125.80,60.90 126.30,60.04 126.80,60.12 127.30,60.62 127.80,60.58 128.30,60.88 128.80,60.79 129.30,60.78 129.80,60.46 130.30,60.82 130.80,60.73 131.30,60.79 131.80,60.14 132.30,60.46 132.80,60.47 133.30,60.54 133.80,60.32 134.30,60.38 134.80,60.10 135.30,59.89 135.80,60.27 136.30,59.86 136.80,60.44 137.30,59.93 137.80,60.54 138.30,60.05 138.80,59.92 139.30,60.06 139.80,60.05 140.30,59.87 140.80,59.87 141.30,59.78 141.80,60.18 142.30,60.08 142.80,59.59 143.30,60.21 143.80,60.12 144.30,60.23 144.80,59.88 145.30,60.04 145.80,59.57 146.30,59.51 146.80,59.67 147.30,59.66" fill="none" stroke="#f6f02a" stroke-width="1.7"/></svg>
<div style="left:373.0px;top:95.90px;height:5px;line-height:5px;font-size:4.8px;color:#8a8a8a;white-space:nowrap;-webkit-text-stroke:0.15px #8a8a8a;background:#000">15 %</div>
<div style="left:373.0px;top:116.70px;height:5px;line-height:5px;font-size:4.8px;color:#8a8a8a;white-space:nowrap;-webkit-text-stroke:0.15px #8a8a8a;background:#000">10 %</div>
<div style="left:372.3px;top:160.80px;height:8px;line-height:8px;font-size:4.8px;color:#e0e0e0;white-space:nowrap;-webkit-text-stroke:0.15px #e0e0e0;">0 Hz</div>
<div style="left:294.54999999999995px;width:300px;text-align:center;top:160.80px;height:8px;line-height:8px;font-size:4.8px;color:#e0e0e0;white-space:nowrap;-webkit-text-stroke:0.15px #e0e0e0;">9.83 MHz/</div>
<div style="right:224.70000000000005px;text-align:right;top:160.80px;height:8px;line-height:8px;font-size:4.8px;color:#e0e0e0;white-space:nowrap;-webkit-text-stroke:0.15px #e0e0e0;">98.28 MHz</div>
<div style="left:520px;top:76.5px;width:148.29999999999995px;height:90.5px;background:#000;"></div>
<svg style="position:absolute;left:520px;top:76.5px" width="148.29999999999995" height="90.5" viewBox="0 0 148.29999999999995 90.5"><line x1="14.75" y1="0" x2="14.75" y2="90.5" stroke="#363636" stroke-width="0.9"/><line x1="29.50" y1="0" x2="29.50" y2="90.5" stroke="#363636" stroke-width="0.9"/><line x1="44.25" y1="0" x2="44.25" y2="90.5" stroke="#363636" stroke-width="0.9"/><line x1="59.00" y1="0" x2="59.00" y2="90.5" stroke="#363636" stroke-width="0.9"/><line x1="73.75" y1="0" x2="73.75" y2="90.5" stroke="#363636" stroke-width="0.9"/><line x1="88.50" y1="0" x2="88.50" y2="90.5" stroke="#363636" stroke-width="0.9"/><line x1="103.25" y1="0" x2="103.25" y2="90.5" stroke="#363636" stroke-width="0.9"/><line x1="118.00" y1="0" x2="118.00" y2="90.5" stroke="#363636" stroke-width="0.9"/><line x1="132.75" y1="0" x2="132.75" y2="90.5" stroke="#363636" stroke-width="0.9"/><line x1="0" y1="0.70" x2="148.29999999999995" y2="0.70" stroke="#363636" stroke-width="0.9"/><line x1="0" y1="21.50" x2="148.29999999999995" y2="21.50" stroke="#363636" stroke-width="0.9"/><line x1="0" y1="42.10" x2="148.29999999999995" y2="42.10" stroke="#363636" stroke-width="0.9"/><line x1="0" y1="62.70" x2="148.29999999999995" y2="62.70" stroke="#363636" stroke-width="0.9"/><line x1="0" y1="82.90" x2="148.29999999999995" y2="82.90" stroke="#363636" stroke-width="0.9"/><path d="M3.80,47.29V50.20M9.30,46.62V49.38M14.30,44.33V47.70M15.30,42.41V49.57M20.30,39.28V48.35M27.80,45.32V49.66M47.80,42.23V52.88M53.80,48.54V54.29M58.30,44.23V55.03M64.30,46.45V52.19M69.80,49.80V51.41M84.30,41.12V52.44M97.30,41.20V45.15M103.80,33.36V43.63M107.80,36.99V42.54M108.80,36.33V43.95M121.30,34.81V43.02M126.30,38.71V43.98M129.30,39.47V44.12" stroke="#2ee42e" stroke-width="0.6"/><path d="M0.30,52.56V61.07M0.80,51.20V61.18M1.30,52.73V60.97M1.80,48.79V61.12M2.30,51.71V60.85M2.80,50.85V61.02M3.30,49.24V60.34M3.80,50.20V60.89M4.30,50.51V60.63M4.80,49.99V60.84M5.30,48.49V60.23M5.80,50.60V60.61M6.30,49.71V59.99M6.80,50.64V60.71M7.30,50.60V60.18M7.80,50.43V60.63M8.30,50.77V59.74M8.80,52.23V60.34M9.30,49.38V60.13M9.80,48.98V59.63M10.30,48.08V59.86M10.80,50.20V60.16M11.30,50.44V59.86M11.80,49.31V59.46M12.30,50.02V59.53M12.80,51.50V59.83M13.30,48.07V59.50M13.80,49.68V59.44M14.30,47.70V59.03M14.80,47.33V59.42M15.30,49.57V58.95M15.80,49.94V59.15M16.30,49.50V59.27M16.80,49.58V59.61M17.30,49.48V58.80M17.80,46.82V59.06M18.30,50.12V59.57M18.80,49.48V58.95M19.30,50.11V59.06M19.80,51.84V59.45M20.30,48.35V59.45M20.80,48.22V58.91M21.30,49.89V59.25M21.80,49.56V59.48M22.30,48.69V58.89M22.80,50.10V59.41M23.30,49.65V58.92M23.80,48.57V58.94M24.30,49.98V58.78M24.80,50.33V59.41M25.30,48.96V59.49M25.80,47.69V59.06M26.30,51.42V59.51M26.80,48.17V58.91M27.30,50.92V59.36M27.80,49.66V59.28M28.30,50.02V59.36M28.80,49.46V59.23M29.30,50.32V59.20M29.80,49.95V59.18M30.30,51.53V60.01M30.80,50.01V59.89M31.30,49.10V59.35M31.80,51.37V59.83M32.30,50.59V59.64M32.80,48.78V59.81M33.30,48.65V60.10M33.80,50.24V60.15M34.30,52.66V60.52M34.80,51.84V60.47M35.30,51.91V59.89M35.80,50.50V60.39M36.30,52.64V60.65M36.80,50.73V60.14M37.30,53.23V60.57M37.80,51.47V60.36M38.30,51.46V60.76M38.80,51.59V60.91M39.30,50.79V60.45M39.80,51.75V61.19M40.30,52.49V60.88M40.80,53.39V60.84M41.30,50.90V60.97M41.80,51.66V61.49M42.30,51.84V61.50M42.80,50.92V61.69M43.30,51.68V60.98M43.80,51.08V61.68M44.30,53.96V61.87M44.80,50.90V61.55M45.30,50.06V61.33M45.80,51.54V61.42M46.30,52.65V62.13M46.80,52.55V61.59M47.30,54.47V62.09M47.80,52.88V62.13M48.30,53.88V61.62M48.80,52.88V61.78M49.30,53.17V61.94M49.80,53.92V62.56M50.30,53.24V62.13M50.80,52.71V61.82M51.30,52.79V62.25M51.80,53.77V62.62M52.30,53.03V62.12M52.80,52.12V62.80M53.30,54.32V62.74M53.80,54.29V62.32M54.30,55.07V62.32M54.80,51.09V62.64M55.30,52.95V62.95M55.80,55.01V62.24M56.30,53.12V62.78M56.80,50.88V62.48M57.30,53.99V62.94M57.80,54.15V63.09M58.30,55.03V62.82M58.80,55.50V62.79M59.30,50.76V62.70M59.80,53.05V62.58M60.30,53.91V62.63M60.80,53.42V62.42M61.30,54.55V62.88M61.80,54.15V62.74M62.30,55.06V62.98M62.80,53.28V63.21M63.30,53.02V62.65M63.80,51.18V62.31M64.30,52.19V62.26M64.80,52.70V62.84M65.30,51.13V62.30M65.80,53.33V62.98M66.30,54.01V62.67M66.80,52.55V62.15M67.30,53.08V62.63M67.80,52.65V62.01M68.30,50.94V62.08M68.80,53.05V62.33M69.30,53.99V62.56M69.80,51.41V62.23M70.30,54.78V62.42M70.80,55.18V62.22M71.30,51.75V61.65M71.80,52.13V61.40M72.30,51.30V62.13M72.80,53.31V61.70M73.30,51.89V61.28M73.80,52.69V61.28M74.30,51.50V61.61M74.80,53.47V61.24M75.30,53.61V61.11M75.80,52.31V60.98M76.30,52.63V60.84M76.80,50.88V60.89M77.30,52.34V60.88M77.80,52.69V60.86M78.30,51.99V60.72M78.80,51.43V60.87M79.30,50.18V61.10M79.80,53.27V61.22M80.30,52.44V60.95M80.80,52.99V60.65M81.30,51.41V61.33M81.80,51.51V60.84M82.30,52.90V61.11M82.80,52.22V60.95M83.30,50.34V61.08M83.80,52.35V61.07M84.30,52.44V60.90M84.80,51.51V60.85M85.30,52.17V60.83M85.80,50.73V60.84M86.30,50.72V60.81M86.80,49.78V59.98M87.30,51.89V59.76M87.80,51.75V60.18M88.30,51.16V60.01M88.80,51.45V59.46M89.30,51.29V59.97M89.80,48.89V59.48M90.30,49.45V59.24M90.80,50.56V58.81M91.30,46.31V58.82M91.80,48.53V58.57M92.30,50.14V58.53M92.80,48.86V58.33M93.30,49.25V58.43M93.80,47.94V57.99M94.30,49.10V57.91M94.80,48.84V57.82M95.30,49.13V57.64M95.80,47.05V57.41M96.30,46.28V57.11M96.80,48.44V57.17M97.30,45.15V57.07M97.80,47.88V56.25M98.30,47.69V56.85M98.80,46.51V55.99M99.30,46.25V56.32M99.80,46.69V55.80M100.30,45.33V55.30M100.80,44.50V55.48M101.30,43.79V55.14M101.80,46.65V55.34M102.30,45.01V55.18M102.80,44.75V55.26M103.30,45.84V54.88M103.80,43.63V54.74M104.30,44.53V54.71M104.80,43.11V54.44M105.30,44.67V54.67M105.80,42.96V54.20M106.30,42.78V53.96M106.80,41.99V54.15M107.30,42.80V54.44M107.80,42.54V54.31M108.30,44.68V54.56M108.80,43.95V54.32M109.30,42.68V53.77M109.80,40.21V53.76M110.30,43.08V54.11M110.80,43.56V54.06M111.30,44.52V54.37M111.80,43.39V53.97M112.30,42.73V53.79M112.80,41.88V54.07M113.30,42.07V54.02M113.80,44.15V54.56M114.30,43.19V54.48M114.80,41.87V54.09M115.30,42.33V54.46M115.80,42.35V54.39M116.30,45.02V54.74M116.80,42.29V54.40M117.30,43.09V54.75M117.80,43.27V55.00M118.30,43.37V55.00M118.80,45.32V55.46M119.30,43.61V55.53M119.80,42.32V55.07M120.30,44.52V54.97M120.80,44.56V55.29M121.30,43.02V55.49M121.80,44.95V55.88M122.30,42.39V55.52M122.80,44.13V56.18M123.30,43.08V56.12M123.80,44.89V55.91M124.30,42.46V56.57M124.80,46.55V55.96M125.30,44.47V56.25M125.80,43.10V56.41M126.30,43.98V56.66M126.80,45.25V56.58M127.30,43.36V57.05M127.80,45.42V56.96M128.30,44.12V56.82M128.80,46.69V57.21M129.30,44.12V56.78M129.80,43.48V56.44M130.30,44.03V56.61M130.80,45.57V57.13M131.30,45.78V56.60M131.80,44.46V56.94M132.30,44.82V56.56M132.80,46.36V56.67M133.30,46.31V57.38M133.80,46.88V57.30M134.30,47.45V57.39M134.80,45.82V57.08M135.30,45.49V56.82M135.80,48.07V57.23M136.30,45.99V57.40M136.80,45.59V57.60M137.30,48.67V57.92M137.80,46.69V57.70M138.30,46.41V58.06M138.80,44.48V57.94M139.30,48.58V58.44M139.80,49.52V58.54M140.30,49.05V58.59M140.80,47.04V58.87M141.30,48.78V59.09M141.80,47.93V58.56M142.30,47.54V58.77M142.80,48.87V59.06M143.30,48.79V59.43M143.80,49.19V59.46M144.30,49.69V59.54M144.80,47.44V59.15M145.30,48.04V59.07M145.80,50.43V59.77M146.30,51.55V60.06M146.80,50.32V59.49M147.30,51.30V59.66M147.80,49.38V59.91" stroke="#38ec38" stroke-width="0.7"/><path d="M0.80,51.34v1.66M2.30,55.61v1.01M3.30,55.88v1.79M4.80,56.01v1.79M5.30,51.42v1.09M8.30,53.82v1.56M9.80,55.63v0.85M10.80,51.71v1.87M11.30,57.73v1.14M11.80,57.16v1.11M14.80,56.86v1.33M15.80,50.02v1.51M17.30,50.88v1.65M17.80,51.70v1.32M18.30,57.57v1.24M18.80,52.28v0.83M19.30,50.95v1.94M20.30,56.92v1.17M22.30,54.77v1.47M24.30,53.94v1.92M24.80,55.11v0.83M26.30,55.66v0.61M26.80,51.10v1.33M27.30,51.51v1.47M28.80,50.18v1.53M30.30,52.55v0.92M34.30,53.29v0.70M40.80,53.76v1.64M42.80,56.10v1.21M47.30,57.86v1.87M47.80,58.96v1.90M48.30,56.52v1.49M49.80,55.04v0.70M52.30,55.32v1.27M57.30,57.04v1.71M60.30,59.68v1.28M63.80,56.99v1.13M64.80,53.81v1.74M65.30,59.50v0.91M66.80,53.59v1.26M69.30,57.32v0.77M72.80,54.32v0.81M73.80,53.30v1.27M76.80,58.11v0.60M77.80,53.12v1.36M78.80,55.03v0.78M80.80,54.99v1.82M81.80,53.54v1.30M83.30,54.29v1.10M89.30,56.61v1.73M89.80,54.26v1.69M90.80,51.13v1.12M91.30,51.68v1.29M96.30,51.68v0.65M97.30,54.07v1.07M99.30,52.26v1.76M101.30,46.37v1.49M105.30,46.66v0.72M106.30,43.12v1.66M107.80,47.98v1.81M109.80,48.57v1.12M112.80,46.70v0.62M114.30,47.25v0.99M114.80,47.07v1.31M116.30,49.78v0.87M119.30,49.24v0.90M123.80,51.06v1.85M125.30,47.45v1.29M125.80,46.90v0.62M126.80,52.08v1.72M131.30,48.17v1.29M131.80,45.86v1.03M132.80,52.73v1.68M134.30,53.63v1.67M136.30,48.64v1.63M140.80,47.71v1.33M141.30,56.58v1.43M143.80,50.73v0.85" stroke="#128a12" stroke-width="0.45"/><path d="M0.30,61.97V67.58M0.80,62.08V67.91M1.30,61.87V67.95M1.80,62.02V67.36M2.30,61.75V67.59M2.80,61.92V67.40M3.30,61.24V66.91M3.80,61.79V69.50M4.30,61.53V67.89M4.80,61.74V68.93M5.30,61.13V67.22M5.80,61.51V69.47M6.30,60.89V68.25M6.80,61.61V67.04M7.30,61.08V66.56M7.80,61.53V67.94M8.30,60.64V70.07M8.80,61.24V66.87M9.30,61.03V67.57M9.80,60.53V66.23M10.30,60.76V67.88M10.80,61.06V67.35M11.30,60.76V66.76M11.80,60.36V65.92M12.30,60.43V66.41M12.80,60.73V66.95M13.30,60.40V66.35M13.80,60.34V66.03M14.30,59.93V65.86M14.80,60.32V66.27M15.30,59.85V65.86M15.80,60.05V65.51M16.30,60.17V65.49M16.80,60.51V66.85M17.30,59.70V65.34M17.80,59.96V65.53M18.30,60.47V68.37M18.80,59.85V66.89M19.30,59.96V66.00M19.80,60.35V66.49M20.30,60.35V68.35M20.80,59.81V66.18M21.30,60.15V66.15M21.80,60.38V66.20M22.30,59.79V65.41M22.80,60.31V65.94M23.30,59.82V65.37M23.80,59.84V66.73M24.30,59.68V65.80M24.80,60.31V67.04M25.30,60.39V67.24M25.80,59.96V66.88M26.30,60.41V65.77M26.80,59.81V66.59M27.30,60.26V65.76M27.80,60.18V68.46M28.30,60.26V68.04M28.80,60.13V67.76M29.30,60.10V66.48M29.80,60.08V66.52M30.30,60.91V68.12M30.80,60.79V67.25M31.30,60.25V68.18M31.80,60.73V67.71M32.30,60.54V67.05M32.80,60.71V67.44M33.30,61.00V67.22M33.80,61.05V67.32M34.30,61.42V69.05M34.80,61.37V68.78M35.30,60.79V69.03M35.80,61.29V67.07M36.30,61.55V67.92M36.80,61.04V67.09M37.30,61.47V68.67M37.80,61.26V67.49M38.30,61.66V68.01M38.80,61.81V68.10M39.30,61.35V68.87M39.80,62.09V68.27M40.30,61.78V69.47M40.80,61.74V68.00M41.30,61.87V67.52M41.80,62.39V70.33M42.30,62.40V67.85M42.80,62.59V70.08M43.30,61.88V69.41M43.80,62.58V70.82M44.30,62.77V69.25M44.80,62.45V70.50M45.30,62.23V68.28M45.80,62.32V67.66M46.30,63.03V69.89M46.80,62.49V68.60M47.30,62.99V69.98M47.80,63.03V70.47M48.30,62.52V69.83M48.80,62.68V69.02M49.30,62.84V69.60M49.80,63.46V70.54M50.30,63.03V68.92M50.80,62.72V69.32M51.30,63.15V69.14M51.80,63.52V69.97M52.30,63.02V69.83M52.80,63.70V69.65M53.30,63.64V69.95M53.80,63.22V69.27M54.30,63.22V70.78M54.80,63.54V70.54M55.30,63.85V70.72M55.80,63.14V68.65M56.30,63.68V69.23M56.80,63.38V69.41M57.30,63.84V69.54M57.80,63.99V70.49M58.30,63.72V70.24M58.80,63.69V70.37M59.30,63.60V69.79M59.80,63.48V71.16M60.30,63.53V70.75M60.80,63.32V69.42M61.30,63.78V69.32M61.80,63.64V71.21M62.30,63.88V70.11M62.80,64.11V70.52M63.30,63.55V68.97M63.80,63.21V69.10M64.30,63.16V69.88M64.80,63.74V71.75M65.30,63.20V68.90M65.80,63.88V70.45M66.30,63.57V70.42M66.80,63.05V68.82M67.30,63.53V71.31M67.80,62.91V68.50M68.30,62.98V69.59M68.80,63.23V70.11M69.30,63.46V68.87M69.80,63.13V68.54M70.30,63.32V68.70M70.80,63.12V69.26M71.30,62.55V67.97M71.80,62.30V67.68M72.30,63.03V68.40M72.80,62.60V68.53M73.30,62.18V68.29M73.80,62.18V70.09M74.30,62.51V68.29M74.80,62.14V68.63M75.30,62.01V68.47M75.80,61.88V69.07M76.30,61.74V67.60M76.80,61.79V67.93M77.30,61.78V71.20M77.80,61.76V68.44M78.30,61.62V66.99M78.80,61.77V68.52M79.30,62.00V67.92M79.80,62.12V68.68M80.30,61.85V68.37M80.80,61.55V66.96M81.30,62.23V67.91M81.80,61.74V67.16M82.30,62.01V67.54M82.80,61.85V67.90M83.30,61.98V67.53M83.80,61.97V68.25M84.30,61.80V67.59M84.80,61.75V68.01M85.30,61.73V67.85M85.80,61.74V67.59M86.30,61.71V69.39M86.80,60.88V66.70M87.30,60.66V67.22M87.80,61.08V68.99M88.30,60.91V66.49M88.80,60.36V67.01M89.30,60.87V66.88M89.80,60.38V66.14M90.30,60.14V66.10M90.80,59.71V65.10M91.30,59.72V65.42M91.80,59.47V65.76M92.30,59.43V66.17M92.80,59.23V64.88M93.30,59.33V65.20M93.80,58.89V64.36M94.30,58.81V64.92M94.80,58.72V64.10M95.30,58.54V65.80M95.80,58.31V64.54M96.30,58.01V65.14M96.80,58.07V64.09M97.30,57.97V63.84M97.80,57.15V63.54M98.30,57.75V64.14M98.80,56.89V62.99M99.30,57.22V65.83M99.80,56.70V65.40M100.30,56.20V64.36M100.80,56.38V64.27M101.30,56.04V63.38M101.80,56.24V61.57M102.30,56.08V61.89M102.80,56.16V62.83M103.30,55.78V63.85M103.80,55.64V61.55M104.30,55.61V63.30M104.80,55.34V61.44M105.30,55.57V63.27M105.80,55.10V62.19M106.30,54.86V64.71M106.80,55.05V61.86M107.30,55.34V60.77M107.80,55.21V60.95M108.30,55.46V62.18M108.80,55.22V62.11M109.30,54.67V62.38M109.80,54.66V61.32M110.30,55.01V61.49M110.80,54.96V60.51M111.30,55.27V60.83M111.80,54.87V60.35M112.30,54.69V60.59M112.80,54.97V60.43M113.30,54.92V62.19M113.80,55.46V61.25M114.30,55.38V62.30M114.80,54.99V60.32M115.30,55.36V64.55M115.80,55.29V61.20M116.30,55.64V61.60M116.80,55.30V61.57M117.30,55.65V62.49M117.80,55.90V64.37M118.30,55.90V63.50M118.80,56.36V63.21M119.30,56.43V62.48M119.80,55.97V63.66M120.30,55.87V61.33M120.80,56.19V62.78M121.30,56.39V62.16M121.80,56.78V62.83M122.30,56.42V62.80M122.80,57.08V65.23M123.30,57.02V63.25M123.80,56.81V63.85M124.30,57.47V63.60M124.80,56.86V62.24M125.30,57.15V64.28M125.80,57.31V65.54M126.30,57.56V64.45M126.80,57.48V62.86M127.30,57.95V64.06M127.80,57.86V65.00M128.30,57.72V63.88M128.80,58.11V63.85M129.30,57.68V63.44M129.80,57.34V63.03M130.30,57.51V63.16M130.80,58.03V65.02M131.30,57.50V66.04M131.80,57.84V63.63M132.30,57.46V62.80M132.80,57.57V64.81M133.30,58.28V66.31M133.80,58.20V64.55M134.30,58.29V65.57M134.80,57.98V63.84M135.30,57.72V63.54M135.80,58.13V64.30M136.30,58.30V64.59M136.80,58.50V65.97M137.30,58.82V64.77M137.80,58.60V66.40M138.30,58.96V65.27M138.80,58.84V65.93M139.30,59.34V64.66M139.80,59.44V66.31M140.30,59.49V64.93M140.80,59.77V66.06M141.30,59.99V66.46M141.80,59.46V64.82M142.30,59.67V65.63M142.80,59.96V66.10M143.30,60.33V66.36M143.80,60.36V67.16M144.30,60.44V67.51M144.80,60.05V66.88M145.30,59.97V67.07M145.80,60.67V67.79M146.30,60.96V66.50M146.80,60.39V67.42M147.30,60.56V67.93M147.80,60.81V67.78" stroke="#2f84f6" stroke-width="0.7"/><path d="M2.30,65.64v0.52M3.30,63.65v0.80M3.80,66.77v1.10M5.30,64.00v1.48M5.80,64.07v0.91M7.80,63.87v1.41M8.80,65.74v1.14M9.30,63.73v0.64M9.80,63.10v1.19M10.30,66.02v0.73M11.80,64.19v0.75M13.30,63.19v0.62M13.80,63.02v0.62M14.80,64.75v0.71M15.30,61.75v1.16M15.80,62.73v1.24M16.80,64.15v1.40M18.80,63.95v0.76M19.30,63.12v1.08M20.30,61.55v0.79M21.80,64.05v0.76M22.80,64.79v1.29M23.80,61.97v0.77M25.30,65.13v0.80M25.80,61.13v1.03M26.30,63.83v1.49M27.30,64.05v1.23M28.80,62.29v1.08M30.80,64.55v0.59M31.30,62.04v1.01M31.80,63.71v0.98M33.80,63.79v0.59M34.80,63.76v1.47M35.80,65.92v0.61M36.30,66.30v0.82M37.30,66.90v1.32M37.80,66.11v0.91M39.80,66.74v1.05M40.30,64.28v0.60M42.30,64.71v0.86M46.80,64.96v1.22M48.30,67.62v0.75M48.80,64.14v0.69M50.30,67.40v1.07M51.30,65.67v1.35M52.80,66.29v1.11M53.80,67.50v0.65M55.80,64.79v0.68M56.80,65.08v0.85M61.30,65.27v1.37M64.80,67.80v0.84M65.80,69.06v1.31M66.80,65.50v1.05M67.80,64.72v0.62M68.80,68.96v0.74M71.80,64.59v1.16M73.30,63.51v0.92M73.80,67.72v0.72M74.30,63.86v0.58M79.30,63.31v1.08M80.30,66.81v1.22M80.80,65.66v1.29M81.30,65.19v0.98M85.80,63.43v0.78M86.30,67.12v0.87M86.80,63.43v0.88M87.30,61.85v1.17M88.80,65.95v0.74M91.80,60.92v1.46M94.30,62.50v0.64M96.80,62.66v0.94M97.30,59.35v1.12M98.80,60.79v0.96M100.30,61.74v1.16M102.80,57.72v0.91M103.30,60.33v0.69M103.80,56.88v1.27M104.30,59.92v1.15M105.30,59.41v0.75M105.80,56.24v0.83M108.30,57.95v1.21M108.80,59.18v0.84M111.30,57.90v1.26M111.80,57.86v0.92M112.30,59.30v0.61M112.80,56.34v0.59M113.30,60.36v0.55M113.80,56.80v1.19M114.30,57.81v1.14M116.80,57.20v1.46M119.30,58.14v1.22M120.30,60.19v0.73M120.80,58.57v1.47M122.80,62.45v1.43M123.80,60.35v0.83M125.80,61.00v1.34M126.30,61.63v0.57M126.80,60.55v1.37M131.30,64.02v0.90M132.30,61.60v1.31M134.30,60.85v1.27M134.80,59.35v1.25M136.30,60.58v1.36M137.30,61.58v1.49M138.80,64.53v1.14M141.80,60.73v0.66M143.30,63.35v0.53M144.80,62.24v1.34M145.30,64.59v0.80M146.80,65.30v0.72M147.80,63.42v0.84" stroke="#163e80" stroke-width="0.45"/><polyline points="0.30,61.07 0.80,61.18 1.30,60.97 1.80,61.12 2.30,60.85 2.80,61.02 3.30,60.34 3.80,60.89 4.30,60.63 4.80,60.84 5.30,60.23 5.80,60.61 6.30,59.99 6.80,60.71 7.30,60.18 7.80,60.63 8.30,59.74 8.80,60.34 9.30,60.13 9.80,59.63 10.30,59.86 10.80,60.16 11.30,59.86 11.80,59.46 12.30,59.53 12.80,59.83 13.30,59.50 13.80,59.44 14.30,59.03 14.80,59.42 15.30,58.95 15.80,59.15 16.30,59.27 16.80,59.61 17.30,58.80 17.80,59.06 18.30,59.57 18.80,58.95 19.30,59.06 19.80,59.45 20.30,59.45 20.80,58.91 21.30,59.25 21.80,59.48 22.30,58.89 22.80,59.41 23.30,58.92 23.80,58.94 24.30,58.78 24.80,59.41 25.30,59.49 25.80,59.06 26.30,59.51 26.80,58.91 27.30,59.36 27.80,59.28 28.30,59.36 28.80,59.23 29.30,59.20 29.80,59.18 30.30,60.01 30.80,59.89 31.30,59.35 31.80,59.83 32.30,59.64 32.80,59.81 33.30,60.10 33.80,60.15 34.30,60.52 34.80,60.47 35.30,59.89 35.80,60.39 36.30,60.65 36.80,60.14 37.30,60.57 37.80,60.36 38.30,60.76 38.80,60.91 39.30,60.45 39.80,61.19 40.30,60.88 40.80,60.84 41.30,60.97 41.80,61.49 42.30,61.50 42.80,61.69 43.30,60.98 43.80,61.68 44.30,61.87 44.80,61.55 45.30,61.33 45.80,61.42 46.30,62.13 46.80,61.59 47.30,62.09 47.80,62.13 48.30,61.62 48.80,61.78 49.30,61.94 49.80,62.56 50.30,62.13 50.80,61.82 51.30,62.25 51.80,62.62 52.30,62.12 52.80,62.80 53.30,62.74 53.80,62.32 54.30,62.32 54.80,62.64 55.30,62.95 55.80,62.24 56.30,62.78 56.80,62.48 57.30,62.94 57.80,63.09 58.30,62.82 58.80,62.79 59.30,62.70 59.80,62.58 60.30,62.63 60.80,62.42 61.30,62.88 61.80,62.74 62.30,62.98 62.80,63.21 63.30,62.65 63.80,62.31 64.30,62.26 64.80,62.84 65.30,62.30 65.80,62.98 66.30,62.67 66.80,62.15 67.30,62.63 67.80,62.01 68.30,62.08 68.80,62.33 69.30,62.56 69.80,62.23 70.30,62.42 70.80,62.22 71.30,61.65 71.80,61.40 72.30,62.13 72.80,61.70 73.30,61.28 73.80,61.28 74.30,61.61 74.80,61.24 75.30,61.11 75.80,60.98 76.30,60.84 76.80,60.89 77.30,60.88 77.80,60.86 78.30,60.72 78.80,60.87 79.30,61.10 79.80,61.22 80.30,60.95 80.80,60.65 81.30,61.33 81.80,60.84 82.30,61.11 82.80,60.95 83.30,61.08 83.80,61.07 84.30,60.90 84.80,60.85 85.30,60.83 85.80,60.84 86.30,60.81 86.80,59.98 87.30,59.76 87.80,60.18 88.30,60.01 88.80,59.46 89.30,59.97 89.80,59.48 90.30,59.24 90.80,58.81 91.30,58.82 91.80,58.57 92.30,58.53 92.80,58.33 93.30,58.43 93.80,57.99 94.30,57.91 94.80,57.82 95.30,57.64 95.80,57.41 96.30,57.11 96.80,57.17 97.30,57.07 97.80,56.25 98.30,56.85 98.80,55.99 99.30,56.32 99.80,55.80 100.30,55.30 100.80,55.48 101.30,55.14 101.80,55.34 102.30,55.18 102.80,55.26 103.30,54.88 103.80,54.74 104.30,54.71 104.80,54.44 105.30,54.67 105.80,54.20 106.30,53.96 106.80,54.15 107.30,54.44 107.80,54.31 108.30,54.56 108.80,54.32 109.30,53.77 109.80,53.76 110.30,54.11 110.80,54.06 111.30,54.37 111.80,53.97 112.30,53.79 112.80,54.07 113.30,54.02 113.80,54.56 114.30,54.48 114.80,54.09 115.30,54.46 115.80,54.39 116.30,54.74 116.80,54.40 117.30,54.75 117.80,55.00 118.30,55.00 118.80,55.46 119.30,55.53 119.80,55.07 120.30,54.97 120.80,55.29 121.30,55.49 121.80,55.88 122.30,55.52 122.80,56.18 123.30,56.12 123.80,55.91 124.30,56.57 124.80,55.96 125.30,56.25 125.80,56.41 126.30,56.66 126.80,56.58 127.30,57.05 127.80,56.96 128.30,56.82 128.80,57.21 129.30,56.78 129.80,56.44 130.30,56.61 130.80,57.13 131.30,56.60 131.80,56.94 132.30,56.56 132.80,56.67 133.30,57.38 133.80,57.30 134.30,57.39 134.80,57.08 135.30,56.82 135.80,57.23 136.30,57.40 136.80,57.60 137.30,57.92 137.80,57.70 138.30,58.06 138.80,57.94 139.30,58.44 139.80,58.54 140.30,58.59 140.80,58.87 141.30,59.09 141.80,58.56 142.30,58.77 142.80,59.06 143.30,59.43 143.80,59.46 144.30,59.54 144.80,59.15 145.30,59.07 145.80,59.77 146.30,60.06 146.80,59.49 147.30,59.66 147.80,59.91" fill="none" stroke="#f6f02a" stroke-width="1.7"/></svg>
<div style="left:522.2px;top:95.90px;height:5px;line-height:5px;font-size:4.8px;color:#8a8a8a;white-space:nowrap;-webkit-text-stroke:0.15px #8a8a8a;background:#000">15 %</div>
<div style="left:522.2px;top:116.70px;height:5px;line-height:5px;font-size:4.8px;color:#8a8a8a;white-space:nowrap;-webkit-text-stroke:0.15px #8a8a8a;background:#000">10 %</div>
<div style="left:521.5px;top:160.80px;height:8px;line-height:8px;font-size:4.8px;color:#e0e0e0;white-space:nowrap;-webkit-text-stroke:0.15px #e0e0e0;">0 Hz</div>
<div style="left:444.15px;width:300px;text-align:center;top:160.80px;height:8px;line-height:8px;font-size:4.8px;color:#e0e0e0;white-space:nowrap;-webkit-text-stroke:0.15px #e0e0e0;">9.83 MHz/</div>
<div style="right:74.70000000000005px;text-align:right;top:160.80px;height:8px;line-height:8px;font-size:4.8px;color:#e0e0e0;white-space:nowrap;-webkit-text-stroke:0.15px #e0e0e0;">98.28 MHz</div>
<div style="left:518.3px;top:70.3px;width:1.7000000000000455px;height:96.7px;background:#f4f4f4;"></div>
<div style="left:69.4px;top:170.4px;width:298.1px;height:7.0px;background:#2b3035;"></div>
<svg style="position:absolute;left:72.60000000000001px;top:172.0px" width="5.0" height="5.0" viewBox="0 0 5.0 5.0"><rect x="0.6" y="0.9" width="1.5" height="1.5" fill="#d8d8d8"/><path d="M1.6,1.9 L3.6,3.9" stroke="#d8d8d8" stroke-width="0.8"/><rect x="2.9" y="3.0" width="1.4" height="1.6" fill="#d8d8d8"/></svg>
<div style="left:79.0px;top:170.70px;height:8px;line-height:8px;font-size:5.1px;color:#e6e6e6;white-space:nowrap;transform:scaleX(0.92);transform-origin:left;-webkit-text-stroke:0.15px #e6e6e6;">NR5G_VSA_DL: 6 Constellation Diagram</div>
<svg style="position:absolute;left:352.7px;top:171.20000000000002px" width="7.0" height="7.0" viewBox="0 0 7.0 7.0"><path d="M2.2,2.2 V1.4 Q2.2,0.7 2.9,0.7 H5.6 Q6.3,0.7 6.3,1.4 V3.6 Q6.3,4.3 5.6,4.3 H4.9" fill="none" stroke="#d0d0d0" stroke-width="0.9"/><rect x="0.9" y="2.5" width="4" height="3.6" rx="0.9" fill="none" stroke="#d0d0d0" stroke-width="1.1"/></svg>
<svg style="position:absolute;left:361.0px;top:170.6px" width="6.0" height="7.0" viewBox="0 0 6.0 7.0"><rect x="0.5" y="0.8" width="5" height="1" fill="#d0d0d0"/><path d="M1,2.3 L5,2.3 L4.6,6.6 L1.4,6.6 Z" fill="#d0d0d0"/></svg>
<div style="left:69.4px;top:177.4px;width:298.1px;height:7.5px;background:#eff1f3;"></div>
<div style="left:70.30000000000001px;top:177.70000000000002px;width:12.700000000000003px;height:7.299999999999983px;background:#57565a;"></div>
<div style="left:-73.35px;width:300px;text-align:center;top:178.20px;height:8px;line-height:8px;font-size:4.9px;color:#8e9194;white-space:nowrap;transform:scaleX(0.95);transform-origin:center;-webkit-text-stroke:0.15px #8e9194;">All</div>
<div style="left:83.70000000000002px;top:177.70000000000002px;width:22.200000000000003px;height:7.299999999999983px;background:#dadde0;"></div>
<div style="left:-55.19999999999999px;width:300px;text-align:center;top:178.20px;height:8px;line-height:8px;font-size:4.9px;color:#a9acaf;white-space:nowrap;transform:scaleX(0.95);transform-origin:center;-webkit-text-stroke:0.15px #a9acaf;">View1</div>
<div style="left:106.60000000000002px;top:177.70000000000002px;width:19.799999999999997px;height:7.299999999999983px;background:#dadde0;"></div>
<div style="left:-33.49999999999997px;width:300px;text-align:center;top:178.20px;height:8px;line-height:8px;font-size:4.9px;color:#a9acaf;white-space:nowrap;transform:scaleX(0.95);transform-origin:center;-webkit-text-stroke:0.15px #a9acaf;">View2</div>
<div style="left:69.4px;top:184.9px;width:298.1px;height:1.0px;background:#a9adb1;"></div>
<div style="left:69.4px;top:185.9px;width:298.1px;height:2.0px;background:#74787c;"></div>
<div style="left:69.80000000000001px;top:187.9px;width:147.79999999999998px;height:6.900000000000006px;background:#2b3035;"></div>
<div style="left:71.30000000000001px;top:187.45px;height:8px;line-height:8px;font-size:5.3px;color:#e8e8e8;white-space:nowrap;transform:scaleX(0.87);transform-origin:left;-webkit-text-stroke:0.15px #e8e8e8;">6.1 Src2 F1</div>
<div style="left:219.4px;top:187.9px;width:148.1px;height:6.900000000000006px;background:#2b3035;"></div>
<div style="left:220.9px;top:187.45px;height:8px;line-height:8px;font-size:5.3px;color:#e8e8e8;white-space:nowrap;transform:scaleX(0.87);transform-origin:left;-webkit-text-stroke:0.15px #e8e8e8;">6.2 Src1 F1</div>
<div style="left:69.80000000000001px;top:194.8px;width:147.79999999999998px;height:90.19999999999999px;background:#000;"></div>
<svg style="position:absolute;left:69.80000000000001px;top:194.8px" width="147.79999999999998" height="90.19999999999999" viewBox="0 0 147.79999999999998 90.19999999999999"><line x1="73.90" y1="0" x2="73.90" y2="90.19999999999999" stroke="#474747" stroke-width="0.9"/><line x1="0" y1="44.80" x2="147.79999999999998" y2="44.80" stroke="#474747" stroke-width="0.9"/><circle cx="52.40" cy="23.30" r="4.8" fill="#ff8a1c"/><circle cx="94.60" cy="23.30" r="4.8" fill="#ff8a1c"/><circle cx="52.40" cy="65.40" r="4.8" fill="#ff8a1c"/><circle cx="94.60" cy="65.40" r="4.8" fill="#ff8a1c"/></svg>
<div style="left:72.10000000000001px;top:195.20px;height:8px;line-height:8px;font-size:5.0px;color:#e6e6e6;white-space:nowrap;transform:scaleX(0.87);transform-origin:left;-webkit-text-stroke:0.15px #e6e6e6;">Points Measured : 681200</div>
<div style="left:219.4px;top:194.8px;width:148.1px;height:90.19999999999999px;background:#000;"></div>
<svg style="position:absolute;left:219.4px;top:194.8px" width="148.1" height="90.19999999999999" viewBox="0 0 148.1 90.19999999999999"><line x1="74.05" y1="0" x2="74.05" y2="90.19999999999999" stroke="#474747" stroke-width="0.9"/><line x1="0" y1="44.80" x2="148.1" y2="44.80" stroke="#474747" stroke-width="0.9"/><circle cx="51.75" cy="23.20" r="5.3" fill="#ff8a1c"/><circle cx="94.95" cy="23.20" r="5.3" fill="#ff8a1c"/><circle cx="51.75" cy="65.60" r="5.3" fill="#ff8a1c"/><circle cx="94.95" cy="65.60" r="5.3" fill="#ff8a1c"/></svg>
<div style="left:221.70000000000002px;top:195.20px;height:8px;line-height:8px;font-size:5.0px;color:#e6e6e6;white-space:nowrap;transform:scaleX(0.87);transform-origin:left;-webkit-text-stroke:0.15px #e6e6e6;">Points Measured : 681200</div>
<div style="left:217.6px;top:187.9px;width:1.8000000000000114px;height:97.1px;background:#f4f4f4;"></div>
<div style="left:370.2px;top:170.4px;width:298.09999999999997px;height:7.0px;background:#2b3035;"></div>
<svg style="position:absolute;left:373.4px;top:172.0px" width="5.0" height="5.0" viewBox="0 0 5.0 5.0"><rect x="0.6" y="0.9" width="1.5" height="1.5" fill="#d8d8d8"/><path d="M1.6,1.9 L3.6,3.9" stroke="#d8d8d8" stroke-width="0.8"/><rect x="2.9" y="3.0" width="1.4" height="1.6" fill="#d8d8d8"/></svg>
<div style="left:379.8px;top:170.70px;height:8px;line-height:8px;font-size:5.1px;color:#e6e6e6;white-space:nowrap;transform:scaleX(0.92);transform-origin:left;-webkit-text-stroke:0.15px #e6e6e6;">NR5G_VSA_DL: 5 Power Spectrum</div>
<svg style="position:absolute;left:653.5px;top:171.20000000000002px" width="7.0" height="7.0" viewBox="0 0 7.0 7.0"><path d="M2.2,2.2 V1.4 Q2.2,0.7 2.9,0.7 H5.6 Q6.3,0.7 6.3,1.4 V3.6 Q6.3,4.3 5.6,4.3 H4.9" fill="none" stroke="#d0d0d0" stroke-width="0.9"/><rect x="0.9" y="2.5" width="4" height="3.6" rx="0.9" fill="none" stroke="#d0d0d0" stroke-width="1.1"/></svg>
<svg style="position:absolute;left:661.8px;top:170.6px" width="6.0" height="7.0" viewBox="0 0 6.0 7.0"><rect x="0.5" y="0.8" width="5" height="1" fill="#d0d0d0"/><path d="M1,2.3 L5,2.3 L4.6,6.6 L1.4,6.6 Z" fill="#d0d0d0"/></svg>
<div style="left:370.2px;top:177.4px;width:298.09999999999997px;height:7.5px;background:#eff1f3;"></div>
<div style="left:371.09999999999997px;top:177.70000000000002px;width:12.699999999999989px;height:7.299999999999983px;background:#57565a;"></div>
<div style="left:227.45px;width:300px;text-align:center;top:178.20px;height:8px;line-height:8px;font-size:4.9px;color:#8e9194;white-space:nowrap;transform:scaleX(0.95);transform-origin:center;-webkit-text-stroke:0.15px #8e9194;">All</div>
<div style="left:384.49999999999994px;top:177.70000000000002px;width:22.19999999999999px;height:7.299999999999983px;background:#dadde0;"></div>
<div style="left:245.59999999999997px;width:300px;text-align:center;top:178.20px;height:8px;line-height:8px;font-size:4.9px;color:#a9acaf;white-space:nowrap;transform:scaleX(0.95);transform-origin:center;-webkit-text-stroke:0.15px #a9acaf;">View1</div>
<div style="left:407.3999999999999px;top:177.70000000000002px;width:19.80000000000001px;height:7.299999999999983px;background:#dadde0;"></div>
<div style="left:267.2999999999999px;width:300px;text-align:center;top:178.20px;height:8px;line-height:8px;font-size:4.9px;color:#a9acaf;white-space:nowrap;transform:scaleX(0.95);transform-origin:center;-webkit-text-stroke:0.15px #a9acaf;">View2</div>
<div style="left:370.2px;top:184.9px;width:298.09999999999997px;height:1.0px;background:#a9adb1;"></div>
<div style="left:370.2px;top:185.9px;width:298.09999999999997px;height:2.0px;background:#74787c;"></div>
<div style="left:370.8px;top:187.9px;width:147.59999999999997px;height:6.900000000000006px;background:#2b3035;"></div>
<div style="left:372.3px;top:187.45px;height:8px;line-height:8px;font-size:5.3px;color:#e8e8e8;white-space:nowrap;transform:scaleX(0.87);transform-origin:left;-webkit-text-stroke:0.15px #e8e8e8;">5.1 Src2 F1</div>
<div style="right:225.60000000000002px;text-align:right;top:187.45px;height:8px;line-height:8px;font-size:5.9px;color:#e8e8e8;white-space:nowrap;transform:scaleX(0.84);transform-origin:right;-webkit-text-stroke:0.15px #e8e8e8;">1 Clrw</div>
<svg style="position:absolute;left:493.75748374999995px;top:188.85000000000002px" width="6.0" height="6.0" viewBox="0 0 6.0 6.0"><circle cx="2.7" cy="2.7" r="1.85" fill="#f5e63a" stroke="#111" stroke-width="0.4"/></svg>
<div style="left:520.3px;top:187.9px;width:148.0px;height:6.900000000000006px;background:#2b3035;"></div>
<div style="left:521.8px;top:187.45px;height:8px;line-height:8px;font-size:5.3px;color:#e8e8e8;white-space:nowrap;transform:scaleX(0.87);transform-origin:left;-webkit-text-stroke:0.15px #e8e8e8;">5.2 Src1 F1</div>
<div style="right:75.70000000000005px;text-align:right;top:187.45px;height:8px;line-height:8px;font-size:5.9px;color:#e8e8e8;white-space:nowrap;transform:scaleX(0.84);transform-origin:right;-webkit-text-stroke:0.15px #e8e8e8;">1 Clrw</div>
<svg style="position:absolute;left:643.65748375px;top:188.85000000000002px" width="6.0" height="6.0" viewBox="0 0 6.0 6.0"><circle cx="2.7" cy="2.7" r="1.85" fill="#f5e63a" stroke="#111" stroke-width="0.4"/></svg>
<div style="left:370.8px;top:195px;width:147.59999999999997px;height:90px;background:#000;"></div>
<svg style="position:absolute;left:370.8px;top:195px" width="147.59999999999997" height="90" viewBox="0 0 147.59999999999997 90"><line x1="15.00" y1="0" x2="15.00" y2="90" stroke="#3c3c3c" stroke-width="0.9"/><line x1="29.70" y1="0" x2="29.70" y2="90" stroke="#3c3c3c" stroke-width="0.9"/><line x1="44.40" y1="0" x2="44.40" y2="90" stroke="#3c3c3c" stroke-width="0.9"/><line x1="59.10" y1="0" x2="59.10" y2="90" stroke="#3c3c3c" stroke-width="0.9"/><line x1="73.80" y1="0" x2="73.80" y2="90" stroke="#3c3c3c" stroke-width="0.9"/><line x1="88.50" y1="0" x2="88.50" y2="90" stroke="#3c3c3c" stroke-width="0.9"/><line x1="103.20" y1="0" x2="103.20" y2="90" stroke="#3c3c3c" stroke-width="0.9"/><line x1="117.90" y1="0" x2="117.90" y2="90" stroke="#3c3c3c" stroke-width="0.9"/><line x1="132.60" y1="0" x2="132.60" y2="90" stroke="#3c3c3c" stroke-width="0.9"/><line x1="0" y1="11.40" x2="147.59999999999997" y2="11.40" stroke="#3c3c3c" stroke-width="0.9"/><line x1="0" y1="32.00" x2="147.59999999999997" y2="32.00" stroke="#3c3c3c" stroke-width="0.9"/><line x1="0" y1="52.50" x2="147.59999999999997" y2="52.50" stroke="#3c3c3c" stroke-width="0.9"/><line x1="0" y1="73.00" x2="147.59999999999997" y2="73.00" stroke="#3c3c3c" stroke-width="0.9"/><line x1="0" y1="82.70" x2="147.59999999999997" y2="82.70" stroke="#3c3c3c" stroke-width="0.9"/><polyline points="14.20,82.60 14.80,74.30 15.70,74.16 17.63,74.32 19.57,74.50 21.50,74.68 23.43,74.86 25.37,75.04 27.30,75.21 29.23,75.36 31.17,75.48 33.10,75.58 35.03,75.65 36.97,75.69 38.90,75.70 40.83,75.67 42.77,75.61 44.70,75.51 46.63,75.39 48.57,75.25 50.50,75.09 52.43,74.91 54.37,74.73 56.30,74.55 58.23,74.37 60.17,74.20 62.10,74.05 64.03,73.92 65.97,73.82 67.90,73.75 69.83,73.71 71.77,73.70 73.70,73.73 75.63,73.79 77.57,73.88 79.50,74.00 81.43,74.14 83.37,74.30 85.30,74.47 87.23,74.66 89.17,74.84 91.10,75.02 93.03,75.19 94.97,75.34 96.90,75.47 98.83,75.57 100.77,75.65 102.70,75.69 104.63,75.70 106.57,75.67 108.50,75.62 110.43,75.53 112.37,75.41 114.30,75.27 116.23,75.11 118.17,74.94 120.10,74.76 122.03,74.57 123.97,74.39 125.90,74.22 127.83,74.07 129.77,73.94 131.70,73.83 132.60,74.30 133.20,82.60" fill="none" stroke="#b4b436" stroke-width="0.85"/></svg>
<div style="left:373.1px;top:204.00px;height:5px;line-height:5px;font-size:4.8px;color:#8a8a8a;white-space:nowrap;-webkit-text-stroke:0.15px #8a8a8a;background:#000">-60 dBm/Hz</div>
<div style="left:373.1px;top:224.50px;height:5px;line-height:5px;font-size:4.8px;color:#8a8a8a;white-space:nowrap;-webkit-text-stroke:0.15px #8a8a8a;background:#000">-80 dBm/Hz</div>
<div style="left:373.1px;top:245.00px;height:5px;line-height:5px;font-size:4.8px;color:#8a8a8a;white-space:nowrap;-webkit-text-stroke:0.15px #8a8a8a;background:#000">-100 dBm/Hz</div>
<div style="left:373.1px;top:265.70px;height:5px;line-height:5px;font-size:4.8px;color:#8a8a8a;white-space:nowrap;-webkit-text-stroke:0.15px #8a8a8a;">-120 dBm/Hz</div>
<div style="left:372.3px;top:278.10px;height:8px;line-height:8px;font-size:4.8px;color:#e0e0e0;white-space:nowrap;-webkit-text-stroke:0.15px #e0e0e0;">0 Hz</div>
<div style="left:294.6px;width:300px;text-align:center;top:278.10px;height:8px;line-height:8px;font-size:4.8px;color:#e0e0e0;white-space:nowrap;-webkit-text-stroke:0.15px #e0e0e0;">12.29 MHz/</div>
<div style="right:224.60000000000002px;text-align:right;top:278.10px;height:8px;line-height:8px;font-size:4.8px;color:#e0e0e0;white-space:nowrap;-webkit-text-stroke:0.15px #e0e0e0;">122.88 MHz</div>
<div style="left:520.3px;top:195px;width:148.0px;height:90px;background:#000;"></div>
<svg style="position:absolute;left:520.3px;top:195px" width="148.0" height="90" viewBox="0 0 148.0 90"><line x1="15.00" y1="0" x2="15.00" y2="90" stroke="#3c3c3c" stroke-width="0.9"/><line x1="29.70" y1="0" x2="29.70" y2="90" stroke="#3c3c3c" stroke-width="0.9"/><line x1="44.40" y1="0" x2="44.40" y2="90" stroke="#3c3c3c" stroke-width="0.9"/><line x1="59.10" y1="0" x2="59.10" y2="90" stroke="#3c3c3c" stroke-width="0.9"/><line x1="73.80" y1="0" x2="73.80" y2="90" stroke="#3c3c3c" stroke-width="0.9"/><line x1="88.50" y1="0" x2="88.50" y2="90" stroke="#3c3c3c" stroke-width="0.9"/><line x1="103.20" y1="0" x2="103.20" y2="90" stroke="#3c3c3c" stroke-width="0.9"/><line x1="117.90" y1="0" x2="117.90" y2="90" stroke="#3c3c3c" stroke-width="0.9"/><line x1="132.60" y1="0" x2="132.60" y2="90" stroke="#3c3c3c" stroke-width="0.9"/><line x1="0" y1="11.40" x2="148.0" y2="11.40" stroke="#3c3c3c" stroke-width="0.9"/><line x1="0" y1="32.00" x2="148.0" y2="32.00" stroke="#3c3c3c" stroke-width="0.9"/><line x1="0" y1="52.50" x2="148.0" y2="52.50" stroke="#3c3c3c" stroke-width="0.9"/><line x1="0" y1="73.00" x2="148.0" y2="73.00" stroke="#3c3c3c" stroke-width="0.9"/><line x1="0" y1="82.70" x2="148.0" y2="82.70" stroke="#3c3c3c" stroke-width="0.9"/><polyline points="14.20,82.60 14.80,74.30 15.70,74.16 17.63,74.32 19.57,74.50 21.50,74.68 23.43,74.86 25.37,75.04 27.30,75.21 29.23,75.36 31.17,75.48 33.10,75.58 35.03,75.65 36.97,75.69 38.90,75.70 40.83,75.67 42.77,75.61 44.70,75.51 46.63,75.39 48.57,75.25 50.50,75.09 52.43,74.91 54.37,74.73 56.30,74.55 58.23,74.37 60.17,74.20 62.10,74.05 64.03,73.92 65.97,73.82 67.90,73.75 69.83,73.71 71.77,73.70 73.70,73.73 75.63,73.79 77.57,73.88 79.50,74.00 81.43,74.14 83.37,74.30 85.30,74.47 87.23,74.66 89.17,74.84 91.10,75.02 93.03,75.19 94.97,75.34 96.90,75.47 98.83,75.57 100.77,75.65 102.70,75.69 104.63,75.70 106.57,75.67 108.50,75.62 110.43,75.53 112.37,75.41 114.30,75.27 116.23,75.11 118.17,74.94 120.10,74.76 122.03,74.57 123.97,74.39 125.90,74.22 127.83,74.07 129.77,73.94 131.70,73.83 132.60,74.30 133.20,82.60" fill="none" stroke="#b4b436" stroke-width="0.85"/></svg>
<div style="left:522.5999999999999px;top:204.00px;height:5px;line-height:5px;font-size:4.8px;color:#8a8a8a;white-space:nowrap;-webkit-text-stroke:0.15px #8a8a8a;background:#000">-60 dBm/Hz</div>
<div style="left:522.5999999999999px;top:224.50px;height:5px;line-height:5px;font-size:4.8px;color:#8a8a8a;white-space:nowrap;-webkit-text-stroke:0.15px #8a8a8a;background:#000">-80 dBm/Hz</div>
<div style="left:522.5999999999999px;top:245.00px;height:5px;line-height:5px;font-size:4.8px;color:#8a8a8a;white-space:nowrap;-webkit-text-stroke:0.15px #8a8a8a;background:#000">-100 dBm/Hz</div>
<div style="left:522.5999999999999px;top:265.70px;height:5px;line-height:5px;font-size:4.8px;color:#8a8a8a;white-space:nowrap;-webkit-text-stroke:0.15px #8a8a8a;">-120 dBm/Hz</div>
<div style="left:521.8px;top:278.10px;height:8px;line-height:8px;font-size:4.8px;color:#e0e0e0;white-space:nowrap;-webkit-text-stroke:0.15px #e0e0e0;">0 Hz</div>
<div style="left:444.29999999999995px;width:300px;text-align:center;top:278.10px;height:8px;line-height:8px;font-size:4.8px;color:#e0e0e0;white-space:nowrap;-webkit-text-stroke:0.15px #e0e0e0;">12.29 MHz/</div>
<div style="right:74.70000000000005px;text-align:right;top:278.10px;height:8px;line-height:8px;font-size:4.8px;color:#e0e0e0;white-space:nowrap;-webkit-text-stroke:0.15px #e0e0e0;">122.88 MHz</div>
<div style="left:518.4px;top:187.9px;width:1.8999999999999773px;height:97.1px;background:#f4f4f4;"></div>
<div style="left:69.4px;top:288.6px;width:298.1px;height:7.0px;background:#2b3035;"></div>
<svg style="position:absolute;left:72.60000000000001px;top:290.20000000000005px" width="5.0" height="5.0" viewBox="0 0 5.0 5.0"><rect x="0.6" y="0.9" width="1.5" height="1.5" fill="#d8d8d8"/><path d="M1.6,1.9 L3.6,3.9" stroke="#d8d8d8" stroke-width="0.8"/><rect x="2.9" y="3.0" width="1.4" height="1.6" fill="#d8d8d8"/></svg>
<div style="left:79.0px;top:288.90px;height:8px;line-height:8px;font-size:5.1px;color:#e6e6e6;white-space:nowrap;transform:scaleX(0.92);transform-origin:left;-webkit-text-stroke:0.15px #e6e6e6;">NR5G_VSA_DL: 2 Result Summary</div>
<svg style="position:absolute;left:352.7px;top:289.40000000000003px" width="7.0" height="7.0" viewBox="0 0 7.0 7.0"><path d="M2.2,2.2 V1.4 Q2.2,0.7 2.9,0.7 H5.6 Q6.3,0.7 6.3,1.4 V3.6 Q6.3,4.3 5.6,4.3 H4.9" fill="none" stroke="#d0d0d0" stroke-width="0.9"/><rect x="0.9" y="2.5" width="4" height="3.6" rx="0.9" fill="none" stroke="#d0d0d0" stroke-width="1.1"/></svg>
<svg style="position:absolute;left:361.0px;top:288.8px" width="6.0" height="7.0" viewBox="0 0 6.0 7.0"><rect x="0.5" y="0.8" width="5" height="1" fill="#d0d0d0"/><path d="M1,2.3 L5,2.3 L4.6,6.6 L1.4,6.6 Z" fill="#d0d0d0"/></svg>
<div style="left:69.4px;top:295.6px;width:298.1px;height:7.5px;background:#eff1f3;"></div>
<div style="left:70.30000000000001px;top:295.90000000000003px;width:12.700000000000003px;height:7.300000000000011px;background:#57565a;"></div>
<div style="left:-73.35px;width:300px;text-align:center;top:296.40px;height:8px;line-height:8px;font-size:4.9px;color:#8e9194;white-space:nowrap;transform:scaleX(0.95);transform-origin:center;-webkit-text-stroke:0.15px #8e9194;">All</div>
<div style="left:83.70000000000002px;top:295.90000000000003px;width:22.200000000000003px;height:7.300000000000011px;background:#dadde0;"></div>
<div style="left:-55.19999999999999px;width:300px;text-align:center;top:296.40px;height:8px;line-height:8px;font-size:4.9px;color:#a9acaf;white-space:nowrap;transform:scaleX(0.95);transform-origin:center;-webkit-text-stroke:0.15px #a9acaf;">View1</div>
<div style="left:106.60000000000002px;top:295.90000000000003px;width:19.799999999999997px;height:7.300000000000011px;background:#dadde0;"></div>
<div style="left:-33.49999999999997px;width:300px;text-align:center;top:296.40px;height:8px;line-height:8px;font-size:4.9px;color:#a9acaf;white-space:nowrap;transform:scaleX(0.95);transform-origin:center;-webkit-text-stroke:0.15px #a9acaf;">View2</div>
<div style="left:69.4px;top:303.1px;width:298.1px;height:1.0px;background:#a9adb1;"></div>
<div style="left:69.4px;top:304.1px;width:298.1px;height:2.0px;background:#74787c;"></div>
<div style="left:69.60000000000001px;top:305.9px;width:297.9px;height:6.100000000000023px;background:#2b3035;"></div>
<div style="left:71.10000000000001px;top:305.05px;height:8px;line-height:8px;font-size:5.3px;color:#e8e8e8;white-space:nowrap;transform:scaleX(0.87);transform-origin:left;-webkit-text-stroke:0.15px #e8e8e8;">2.1 All</div>
<div style="left:69.5px;top:312.0px;width:297.5px;height:91.5px;background:#000;"></div>
<div style="left:69.5px;top:312.0px;width:291.3px;height:8.199999999999989px;background:#353638;"></div>
<div style="left:69.5px;top:320.2px;width:291.3px;height:7.600000000000023px;background:#323335;"></div>
<div style="left:69.5px;top:320px;width:291.3px;height:0.5px;background:#4a4b4d;"></div>
<div style="left:133.8px;top:312.0px;width:0.8000000000000114px;height:15.800000000000011px;background:#111;"></div>
<div style="left:247.6px;top:320.2px;width:0.8000000000000114px;height:7.600000000000023px;background:#111;"></div>
<div style="left:133.8px;top:327.8px;width:0.8000000000000114px;height:75.69999999999999px;background:#3a3a3a;"></div>
<div style="left:247.6px;top:327.8px;width:0.8000000000000114px;height:75.69999999999999px;background:#3a3a3a;"></div>
<div style="left:97.30000000000001px;width:300px;text-align:center;top:313.70px;height:8px;line-height:8px;font-size:4.9px;color:#f0f0f0;font-weight:bold;white-space:nowrap;">Mean Value</div>
<div style="left:-47.849999999999994px;width:300px;text-align:center;top:320.90px;height:8px;line-height:8px;font-size:4.9px;color:#f0f0f0;font-weight:bold;white-space:nowrap;">Frame Results Averaged</div>
<div style="left:40.69999999999999px;width:300px;text-align:center;top:321.40px;height:8px;line-height:8px;font-size:4.9px;color:#f0f0f0;font-weight:bold;white-space:nowrap;">View1(Src2 F0)</div>
<div style="left:154.2px;width:300px;text-align:center;top:321.40px;height:8px;line-height:8px;font-size:4.9px;color:#f0f0f0;font-weight:bold;white-space:nowrap;">View2(Src1 F0)</div>
<div style="left:72.2px;top:328.50px;height:8px;line-height:8px;font-size:4.8px;color:#e6e6e6;white-space:nowrap;-webkit-text-stroke:0.15px #e6e6e6;">EVM PDSCH QPSK (%)</div>
<div style="left:72.2px;top:335.45px;height:8px;line-height:8px;font-size:4.8px;color:#e6e6e6;white-space:nowrap;-webkit-text-stroke:0.15px #e6e6e6;">EVM PDSCH 16QAM (%)</div>
<div style="left:72.2px;top:342.40px;height:8px;line-height:8px;font-size:4.8px;color:#e6e6e6;white-space:nowrap;-webkit-text-stroke:0.15px #e6e6e6;">EVM PDSCH 64QAM (%)</div>
<div style="left:72.2px;top:349.35px;height:8px;line-height:8px;font-size:4.8px;color:#e6e6e6;white-space:nowrap;-webkit-text-stroke:0.15px #e6e6e6;">EVM PDSCH 256QAM (%)</div>
<div style="left:72.2px;top:356.30px;height:8px;line-height:8px;font-size:4.8px;color:#e6e6e6;white-space:nowrap;-webkit-text-stroke:0.15px #e6e6e6;">EVM PDSCH 1024QAM (%)</div>
<div style="right:496.70000000000005px;text-align:right;top:328.80px;height:8px;line-height:8px;font-size:4.8px;color:#2fcf2f;white-space:nowrap;-webkit-text-stroke:0.15px #2fcf2f;">5.14</div>
<div style="right:380.4px;text-align:right;top:328.80px;height:8px;line-height:8px;font-size:4.8px;color:#2fcf2f;white-space:nowrap;-webkit-text-stroke:0.15px #2fcf2f;">5.92</div>
<div style="left:69.5px;top:363.3px;width:291.3px;height:7.599999999999966px;background:#353638;"></div>
<div style="left:133.8px;top:363.3px;width:0.8000000000000114px;height:7.599999999999966px;background:#111;"></div>
<div style="left:247.6px;top:363.3px;width:0.8000000000000114px;height:7.599999999999966px;background:#111;"></div>
<div style="left:72.2px;top:363.90px;height:8px;line-height:8px;font-size:4.9px;color:#f0f0f0;font-weight:bold;white-space:nowrap;">Results for Selection</div>
<div style="left:40.69999999999999px;width:300px;text-align:center;top:363.90px;height:8px;line-height:8px;font-size:4.9px;color:#f0f0f0;font-weight:bold;white-space:nowrap;">All, All, All</div>
<div style="left:154.2px;width:300px;text-align:center;top:363.90px;height:8px;line-height:8px;font-size:4.9px;color:#f0f0f0;font-weight:bold;white-space:nowrap;">All, All, All</div>
<div style="left:69.5px;top:391.8px;width:291.3px;height:0.6999999999999886px;background:#3c3c3c;"></div>
<div style="left:72.2px;top:371.70px;height:8px;line-height:8px;font-size:4.8px;color:#e6e6e6;white-space:nowrap;-webkit-text-stroke:0.15px #e6e6e6;">EVM All (%)</div>
<div style="right:496.70000000000005px;text-align:right;top:371.70px;height:8px;line-height:8px;font-size:4.8px;color:#e6e6e6;white-space:nowrap;-webkit-text-stroke:0.15px #e6e6e6;">5.13</div>
<div style="right:380.4px;text-align:right;top:371.70px;height:8px;line-height:8px;font-size:4.8px;color:#e6e6e6;white-space:nowrap;-webkit-text-stroke:0.15px #e6e6e6;">5.91</div>
<div style="left:72.2px;top:378.55px;height:8px;line-height:8px;font-size:4.8px;color:#e6e6e6;white-space:nowrap;-webkit-text-stroke:0.15px #e6e6e6;">EVM Phys Channel (%)</div>
<div style="right:496.70000000000005px;text-align:right;top:378.55px;height:8px;line-height:8px;font-size:4.8px;color:#e6e6e6;white-space:nowrap;-webkit-text-stroke:0.15px #e6e6e6;">5.14</div>
<div style="right:380.4px;text-align:right;top:378.55px;height:8px;line-height:8px;font-size:4.8px;color:#e6e6e6;white-space:nowrap;-webkit-text-stroke:0.15px #e6e6e6;">5.92</div>
<div style="left:72.2px;top:385.40px;height:8px;line-height:8px;font-size:4.8px;color:#e6e6e6;white-space:nowrap;-webkit-text-stroke:0.15px #e6e6e6;">EVM Phys Signal (%)</div>
<div style="right:496.70000000000005px;text-align:right;top:385.40px;height:8px;line-height:8px;font-size:4.8px;color:#e6e6e6;white-space:nowrap;-webkit-text-stroke:0.15px #e6e6e6;">5.00</div>
<div style="right:380.4px;text-align:right;top:385.40px;height:8px;line-height:8px;font-size:4.8px;color:#e6e6e6;white-space:nowrap;-webkit-text-stroke:0.15px #e6e6e6;">5.74</div>
<div style="left:72.2px;top:392.25px;height:8px;line-height:8px;font-size:4.8px;color:#e6e6e6;white-space:nowrap;-webkit-text-stroke:0.15px #e6e6e6;">Frequency Error (Hz)</div>
<div style="right:496.70000000000005px;text-align:right;top:392.25px;height:8px;line-height:8px;font-size:4.8px;color:#e01818;white-space:nowrap;-webkit-text-stroke:0.15px #e01818;">505.16</div>
<div style="right:380.4px;text-align:right;top:392.25px;height:8px;line-height:8px;font-size:4.8px;color:#e01818;white-space:nowrap;-webkit-text-stroke:0.15px #e01818;">505.16</div>
<div style="left:72.2px;top:399.10px;height:8px;line-height:8px;font-size:4.8px;color:#e6e6e6;white-space:nowrap;-webkit-text-stroke:0.15px #e6e6e6;">Sampling Error (ppm)</div>
<div style="right:496.70000000000005px;text-align:right;top:399.10px;height:8px;line-height:8px;font-size:4.8px;color:#e6e6e6;white-space:nowrap;-webkit-text-stroke:0.15px #e6e6e6;">0.02</div>
<div style="right:380.4px;text-align:right;top:399.10px;height:8px;line-height:8px;font-size:4.8px;color:#e6e6e6;white-space:nowrap;-webkit-text-stroke:0.15px #e6e6e6;">0.02</div>
<div style="left:360.8px;top:312.0px;width:6.199999999999989px;height:84.0px;background:#c9cdd1;"></div>
<svg style="position:absolute;left:360.8px;top:396px" width="6.199999999999989" height="7.5" viewBox="0 0 6.199999999999989 7.5"><path d="M1.5,2 L4.8,2 L3.15,4.3 Z" fill="#e8e8e8"/></svg>
<svg style="position:absolute;left:360.8px;top:312px" width="6.199999999999989" height="6" viewBox="0 0 6.199999999999989 6"><path d="M1.8,4 L4.6,4 L3.2,2 Z" fill="#9a9ea2"/></svg>
<div style="left:275.6px;top:289.6px;width:36.39999999999998px;height:5.599999999999966px;background:#c8ccd0;"></div>
<div style="left:276.3px;top:290.2px;width:35.0px;height:4.400000000000034px;background:#f6f6f6;"></div>
<div style="left:143.8px;width:300px;text-align:center;top:289.10px;height:8px;line-height:8px;font-size:4.6px;color:#6a6e72;white-space:nowrap;transform:scaleX(0.92);transform-origin:center;-webkit-text-stroke:0.15px #6a6e72;">Selected Frame</div>
<div style="left:312.7px;top:289.6px;width:36.5px;height:5.599999999999966px;background:#c8ccd0;"></div>
<div style="left:313.4px;top:290.2px;width:35.10000000000002px;height:4.400000000000034px;background:#f6f6f6;"></div>
<div style="left:180.95px;width:300px;text-align:center;top:289.10px;height:8px;line-height:8px;font-size:4.6px;color:#6a6e72;white-space:nowrap;transform:scaleX(0.92);transform-origin:center;-webkit-text-stroke:0.15px #6a6e72;">Frame Averaged</div>
<div style="left:370.2px;top:288.6px;width:298.09999999999997px;height:7.0px;background:#2a76d8;"></div>
<svg style="position:absolute;left:373.4px;top:290.20000000000005px" width="5.0" height="5.0" viewBox="0 0 5.0 5.0"><rect x="0.6" y="0.9" width="1.5" height="1.5" fill="#d8d8d8"/><path d="M1.6,1.9 L3.6,3.9" stroke="#d8d8d8" stroke-width="0.8"/><rect x="2.9" y="3.0" width="1.4" height="1.6" fill="#d8d8d8"/></svg>
<div style="left:379.8px;top:288.90px;height:8px;line-height:8px;font-size:5.1px;color:#e6e6e6;white-space:nowrap;transform:scaleX(0.92);transform-origin:left;-webkit-text-stroke:0.15px #e6e6e6;">NR5G_VSA_DL: 4 Beamforming Summary</div>
<svg style="position:absolute;left:653.5px;top:289.40000000000003px" width="7.0" height="7.0" viewBox="0 0 7.0 7.0"><path d="M2.2,2.2 V1.4 Q2.2,0.7 2.9,0.7 H5.6 Q6.3,0.7 6.3,1.4 V3.6 Q6.3,4.3 5.6,4.3 H4.9" fill="none" stroke="#d0d0d0" stroke-width="0.9"/><rect x="0.9" y="2.5" width="4" height="3.6" rx="0.9" fill="none" stroke="#d0d0d0" stroke-width="1.1"/></svg>
<svg style="position:absolute;left:661.8px;top:288.8px" width="6.0" height="7.0" viewBox="0 0 6.0 7.0"><rect x="0.5" y="0.8" width="5" height="1" fill="#d0d0d0"/><path d="M1,2.3 L5,2.3 L4.6,6.6 L1.4,6.6 Z" fill="#d0d0d0"/></svg>
<div style="left:370.2px;top:295.6px;width:298.09999999999997px;height:7.5px;background:#eff1f3;"></div>
<div style="left:371.09999999999997px;top:295.90000000000003px;width:19.600000000000023px;height:7.300000000000011px;background:#57565a;"></div>
<div style="left:230.89999999999998px;width:300px;text-align:center;top:296.40px;height:8px;line-height:8px;font-size:4.9px;color:#8e9194;white-space:nowrap;transform:scaleX(0.95);transform-origin:center;-webkit-text-stroke:0.15px #8e9194;">View1</div>
<div style="left:391.4px;top:295.90000000000003px;width:20.600000000000023px;height:7.300000000000011px;background:#dadde0;"></div>
<div style="left:251.7px;width:300px;text-align:center;top:296.40px;height:8px;line-height:8px;font-size:4.9px;color:#a9acaf;white-space:nowrap;transform:scaleX(0.95);transform-origin:center;-webkit-text-stroke:0.15px #a9acaf;">View2</div>
<div style="left:370.2px;top:302.90000000000003px;width:298.09999999999997px;height:1.599999999999966px;background:#55595d;"></div>
<div style="left:370.2px;top:304.5px;width:298.09999999999997px;height:1.0px;background:#3c4044;"></div>
<div style="left:667.0999999999999px;top:295.6px;width:1.2000000000000455px;height:9.899999999999977px;background:#3c4044;"></div>
<div style="left:370.8px;top:305.6px;width:297.49999999999994px;height:6.399999999999977px;background:#2a76d8;"></div>
<div style="left:372.3px;top:304.90px;height:8px;line-height:8px;font-size:5.3px;color:#e8e8e8;white-space:nowrap;transform:scaleX(0.87);transform-origin:left;-webkit-text-stroke:0.15px #e8e8e8;">4.1 Src2 F1</div>
<div style="left:370.5px;top:312.0px;width:297.5px;height:91.5px;background:#000;"></div>
<div style="left:370.5px;top:312.0px;width:290.1px;height:14.899999999999977px;background:#333436;"></div>
<div style="left:417.4px;top:312.0px;width:0.8000000000000114px;height:14.899999999999977px;background:#111;"></div>
<div style="left:458.6px;top:312.0px;width:0.8000000000000114px;height:14.899999999999977px;background:#111;"></div>
<div style="left:498.2px;top:312.0px;width:0.8000000000000114px;height:14.899999999999977px;background:#111;"></div>
<div style="left:536.2px;top:312.0px;width:0.7999999999999545px;height:14.899999999999977px;background:#111;"></div>
<div style="left:575.6px;top:312.0px;width:0.7999999999999545px;height:14.899999999999977px;background:#111;"></div>
<div style="left:621.4px;top:312.0px;width:0.7999999999999545px;height:14.899999999999977px;background:#111;"></div>
<div style="left:243.95px;width:300px;text-align:center;top:316.90px;height:8px;line-height:8px;font-size:4.9px;color:#f0f0f0;font-weight:bold;white-space:nowrap;">BWP/Sf/Slot</div>
<div style="left:288.0px;width:300px;text-align:center;top:313.60px;height:8px;line-height:8px;font-size:4.9px;color:#f0f0f0;font-weight:bold;white-space:nowrap;">Allocation</div>
<div style="left:288.0px;width:300px;text-align:center;top:320.40px;height:8px;line-height:8px;font-size:4.9px;color:#f0f0f0;font-weight:bold;white-space:nowrap;">Type</div>
<div style="left:328.4px;width:300px;text-align:center;top:313.60px;height:8px;line-height:8px;font-size:4.9px;color:#f0f0f0;font-weight:bold;white-space:nowrap;">Ant</div>
<div style="left:328.4px;width:300px;text-align:center;top:320.40px;height:8px;line-height:8px;font-size:4.9px;color:#f0f0f0;font-weight:bold;white-space:nowrap;">Port</div>
<div style="left:367.20000000000005px;width:300px;text-align:center;top:316.90px;height:8px;line-height:8px;font-size:4.9px;color:#f0f0f0;font-weight:bold;white-space:nowrap;">Phase [°]</div>
<div style="left:405.9000000000001px;width:300px;text-align:center;top:313.60px;height:8px;line-height:8px;font-size:4.9px;color:#f0f0f0;font-weight:bold;white-space:nowrap;">Phase</div>
<div style="left:405.9000000000001px;width:300px;text-align:center;top:320.40px;height:8px;line-height:8px;font-size:4.9px;color:#f0f0f0;font-weight:bold;white-space:nowrap;">Diff [°]</div>
<div style="left:448.5px;width:300px;text-align:center;top:313.60px;height:8px;line-height:8px;font-size:4.9px;color:#f0f0f0;font-weight:bold;white-space:nowrap;">Average RS</div>
<div style="left:448.5px;width:300px;text-align:center;top:320.40px;height:8px;line-height:8px;font-size:4.9px;color:#f0f0f0;font-weight:bold;white-space:nowrap;">weights [dB]</div>
<div style="left:491.0px;width:300px;text-align:center;top:313.60px;height:8px;line-height:8px;font-size:4.9px;color:#f0f0f0;font-weight:bold;white-space:nowrap;">Rel</div>
<div style="left:491.0px;width:300px;text-align:center;top:320.40px;height:8px;line-height:8px;font-size:4.9px;color:#f0f0f0;font-weight:bold;white-space:nowrap;">Power [dB]</div>
<div style="right:323.3px;text-align:right;top:328.00px;height:8px;line-height:8px;font-size:4.8px;color:#e6e6e6;white-space:nowrap;transform:scaleX(1.18);transform-origin:right;-webkit-text-stroke:0.15px #e6e6e6;">0 / 0 / 0</div>
<div style="right:282.0px;text-align:right;top:328.00px;height:8px;line-height:8px;font-size:4.8px;color:#e6e6e6;white-space:nowrap;transform:scaleX(0.96);transform-origin:right;-webkit-text-stroke:0.15px #e6e6e6;">PDSCH</div>
<div style="right:282.0px;text-align:right;top:334.90px;height:8px;line-height:8px;font-size:4.8px;color:#e6e6e6;white-space:nowrap;transform:scaleX(0.92);transform-origin:right;-webkit-text-stroke:0.15px #e6e6e6;">CORESET</div>
<div style="right:243.10000000000002px;text-align:right;top:328.00px;height:8px;line-height:8px;font-size:4.8px;color:#e6e6e6;white-space:nowrap;-webkit-text-stroke:0.15px #e6e6e6;">AP 1000</div>
<div style="right:243.10000000000002px;text-align:right;top:334.90px;height:8px;line-height:8px;font-size:4.8px;color:#e6e6e6;white-space:nowrap;-webkit-text-stroke:0.15px #e6e6e6;">AP 2000</div>
<div style="right:207.20000000000005px;text-align:right;top:328.00px;height:8px;line-height:8px;font-size:4.8px;color:#e6e6e6;white-space:nowrap;-webkit-text-stroke:0.15px #e6e6e6;">-134.672</div>
<div style="right:207.20000000000005px;text-align:right;top:334.90px;height:8px;line-height:8px;font-size:4.8px;color:#e6e6e6;white-space:nowrap;-webkit-text-stroke:0.15px #e6e6e6;">-109.306</div>
<div style="right:168.60000000000002px;text-align:right;top:328.00px;height:8px;line-height:8px;font-size:4.8px;color:#e6e6e6;white-space:nowrap;-webkit-text-stroke:0.15px #e6e6e6;">-134.672</div>
<div style="right:168.60000000000002px;text-align:right;top:334.90px;height:8px;line-height:8px;font-size:4.8px;color:#e6e6e6;white-space:nowrap;-webkit-text-stroke:0.15px #e6e6e6;">-109.306</div>
<div style="right:123.5px;text-align:right;top:328.00px;height:8px;line-height:8px;font-size:4.8px;color:#e6e6e6;white-space:nowrap;-webkit-text-stroke:0.15px #e6e6e6;">-17.511</div>
<div style="right:123.5px;text-align:right;top:334.90px;height:8px;line-height:8px;font-size:4.8px;color:#e6e6e6;white-space:nowrap;-webkit-text-stroke:0.15px #e6e6e6;">-16.781</div>
<div style="right:83.10000000000002px;text-align:right;top:328.00px;height:8px;line-height:8px;font-size:4.8px;color:#e6e6e6;white-space:nowrap;-webkit-text-stroke:0.15px #e6e6e6;">0.642</div>
<div style="right:83.10000000000002px;text-align:right;top:334.90px;height:8px;line-height:8px;font-size:4.8px;color:#e6e6e6;white-space:nowrap;-webkit-text-stroke:0.15px #e6e6e6;">1.372</div>
<div style="left:370.5px;top:341.59999999999997px;width:290.1px;height:0.8000000000000114px;background:#505254;"></div>
<div style="right:323.3px;text-align:right;top:348.80px;height:8px;line-height:8px;font-size:4.8px;color:#e6e6e6;white-space:nowrap;transform:scaleX(1.18);transform-origin:right;-webkit-text-stroke:0.15px #e6e6e6;">0 / 0 / 1</div>
<div style="right:282.0px;text-align:right;top:348.80px;height:8px;line-height:8px;font-size:4.8px;color:#e6e6e6;white-space:nowrap;transform:scaleX(0.96);transform-origin:right;-webkit-text-stroke:0.15px #e6e6e6;">PDSCH</div>
<div style="right:282.0px;text-align:right;top:355.70px;height:8px;line-height:8px;font-size:4.8px;color:#e6e6e6;white-space:nowrap;transform:scaleX(0.92);transform-origin:right;-webkit-text-stroke:0.15px #e6e6e6;">CORESET</div>
<div style="right:243.10000000000002px;text-align:right;top:348.80px;height:8px;line-height:8px;font-size:4.8px;color:#e6e6e6;white-space:nowrap;-webkit-text-stroke:0.15px #e6e6e6;">AP 1000</div>
<div style="right:243.10000000000002px;text-align:right;top:355.70px;height:8px;line-height:8px;font-size:4.8px;color:#e6e6e6;white-space:nowrap;-webkit-text-stroke:0.15px #e6e6e6;">AP 2000</div>
<div style="right:207.20000000000005px;text-align:right;top:348.80px;height:8px;line-height:8px;font-size:4.8px;color:#e6e6e6;white-space:nowrap;-webkit-text-stroke:0.15px #e6e6e6;">-134.742</div>
<div style="right:207.20000000000005px;text-align:right;top:355.70px;height:8px;line-height:8px;font-size:4.8px;color:#e6e6e6;white-space:nowrap;-webkit-text-stroke:0.15px #e6e6e6;">-112.014</div>
<div style="right:168.60000000000002px;text-align:right;top:348.80px;height:8px;line-height:8px;font-size:4.8px;color:#e6e6e6;white-space:nowrap;-webkit-text-stroke:0.15px #e6e6e6;">-134.742</div>
<div style="right:168.60000000000002px;text-align:right;top:355.70px;height:8px;line-height:8px;font-size:4.8px;color:#e6e6e6;white-space:nowrap;-webkit-text-stroke:0.15px #e6e6e6;">-112.014</div>
<div style="right:123.5px;text-align:right;top:348.80px;height:8px;line-height:8px;font-size:4.8px;color:#e6e6e6;white-space:nowrap;-webkit-text-stroke:0.15px #e6e6e6;">-17.467</div>
<div style="right:123.5px;text-align:right;top:355.70px;height:8px;line-height:8px;font-size:4.8px;color:#e6e6e6;white-space:nowrap;-webkit-text-stroke:0.15px #e6e6e6;">-16.552</div>
<div style="right:83.10000000000002px;text-align:right;top:348.80px;height:8px;line-height:8px;font-size:4.8px;color:#e6e6e6;white-space:nowrap;-webkit-text-stroke:0.15px #e6e6e6;">0.649</div>
<div style="right:83.10000000000002px;text-align:right;top:355.70px;height:8px;line-height:8px;font-size:4.8px;color:#e6e6e6;white-space:nowrap;-webkit-text-stroke:0.15px #e6e6e6;">1.563</div>
<div style="left:370.5px;top:362.4px;width:290.1px;height:0.8000000000000114px;background:#505254;"></div>
<div style="right:323.3px;text-align:right;top:369.60px;height:8px;line-height:8px;font-size:4.8px;color:#e6e6e6;white-space:nowrap;transform:scaleX(1.18);transform-origin:right;-webkit-text-stroke:0.15px #e6e6e6;">0 / 1 / 2</div>
<div style="right:282.0px;text-align:right;top:369.60px;height:8px;line-height:8px;font-size:4.8px;color:#e6e6e6;white-space:nowrap;transform:scaleX(0.96);transform-origin:right;-webkit-text-stroke:0.15px #e6e6e6;">PDSCH</div>
<div style="right:282.0px;text-align:right;top:376.50px;height:8px;line-height:8px;font-size:4.8px;color:#e6e6e6;white-space:nowrap;transform:scaleX(0.92);transform-origin:right;-webkit-text-stroke:0.15px #e6e6e6;">CORESET</div>
<div style="right:243.10000000000002px;text-align:right;top:369.60px;height:8px;line-height:8px;font-size:4.8px;color:#e6e6e6;white-space:nowrap;-webkit-text-stroke:0.15px #e6e6e6;">AP 1000</div>
<div style="right:243.10000000000002px;text-align:right;top:376.50px;height:8px;line-height:8px;font-size:4.8px;color:#e6e6e6;white-space:nowrap;-webkit-text-stroke:0.15px #e6e6e6;">AP 2000</div>
<div style="right:207.20000000000005px;text-align:right;top:369.60px;height:8px;line-height:8px;font-size:4.8px;color:#e6e6e6;white-space:nowrap;-webkit-text-stroke:0.15px #e6e6e6;">-134.735</div>
<div style="right:207.20000000000005px;text-align:right;top:376.50px;height:8px;line-height:8px;font-size:4.8px;color:#e6e6e6;white-space:nowrap;-webkit-text-stroke:0.15px #e6e6e6;">-112.103</div>
<div style="right:168.60000000000002px;text-align:right;top:369.60px;height:8px;line-height:8px;font-size:4.8px;color:#e6e6e6;white-space:nowrap;-webkit-text-stroke:0.15px #e6e6e6;">-134.735</div>
<div style="right:168.60000000000002px;text-align:right;top:376.50px;height:8px;line-height:8px;font-size:4.8px;color:#e6e6e6;white-space:nowrap;-webkit-text-stroke:0.15px #e6e6e6;">-112.103</div>
<div style="right:123.5px;text-align:right;top:369.60px;height:8px;line-height:8px;font-size:4.8px;color:#e6e6e6;white-space:nowrap;-webkit-text-stroke:0.15px #e6e6e6;">-17.455</div>
<div style="right:123.5px;text-align:right;top:376.50px;height:8px;line-height:8px;font-size:4.8px;color:#e6e6e6;white-space:nowrap;-webkit-text-stroke:0.15px #e6e6e6;">-16.510</div>
<div style="right:83.10000000000002px;text-align:right;top:369.60px;height:8px;line-height:8px;font-size:4.8px;color:#e6e6e6;white-space:nowrap;-webkit-text-stroke:0.15px #e6e6e6;">0.654</div>
<div style="right:83.10000000000002px;text-align:right;top:376.50px;height:8px;line-height:8px;font-size:4.8px;color:#e6e6e6;white-space:nowrap;-webkit-text-stroke:0.15px #e6e6e6;">1.599</div>
<div style="left:370.5px;top:383.2px;width:290.1px;height:0.8000000000000114px;background:#505254;"></div>
<div style="right:323.3px;text-align:right;top:390.40px;height:8px;line-height:8px;font-size:4.8px;color:#e6e6e6;white-space:nowrap;transform:scaleX(1.18);transform-origin:right;-webkit-text-stroke:0.15px #e6e6e6;">0 / 1 / 3</div>
<div style="right:282.0px;text-align:right;top:390.40px;height:8px;line-height:8px;font-size:4.8px;color:#e6e6e6;white-space:nowrap;transform:scaleX(0.96);transform-origin:right;-webkit-text-stroke:0.15px #e6e6e6;">PDSCH</div>
<div style="right:282.0px;text-align:right;top:397.30px;height:8px;line-height:8px;font-size:4.8px;color:#e6e6e6;white-space:nowrap;transform:scaleX(0.92);transform-origin:right;-webkit-text-stroke:0.15px #e6e6e6;">CORESET</div>
<div style="right:243.10000000000002px;text-align:right;top:390.40px;height:8px;line-height:8px;font-size:4.8px;color:#e6e6e6;white-space:nowrap;-webkit-text-stroke:0.15px #e6e6e6;">AP 1000</div>
<div style="right:243.10000000000002px;text-align:right;top:397.30px;height:8px;line-height:8px;font-size:4.8px;color:#e6e6e6;white-space:nowrap;-webkit-text-stroke:0.15px #e6e6e6;">AP 2000</div>
<div style="right:207.20000000000005px;text-align:right;top:390.40px;height:8px;line-height:8px;font-size:4.8px;color:#e6e6e6;white-space:nowrap;-webkit-text-stroke:0.15px #e6e6e6;">-134.743</div>
<div style="right:207.20000000000005px;text-align:right;top:397.30px;height:8px;line-height:8px;font-size:4.8px;color:#e6e6e6;white-space:nowrap;-webkit-text-stroke:0.15px #e6e6e6;">-113.923</div>
<div style="right:168.60000000000002px;text-align:right;top:390.40px;height:8px;line-height:8px;font-size:4.8px;color:#e6e6e6;white-space:nowrap;-webkit-text-stroke:0.15px #e6e6e6;">-134.743</div>
<div style="right:168.60000000000002px;text-align:right;top:397.30px;height:8px;line-height:8px;font-size:4.8px;color:#e6e6e6;white-space:nowrap;-webkit-text-stroke:0.15px #e6e6e6;">-113.923</div>
<div style="right:123.5px;text-align:right;top:390.40px;height:8px;line-height:8px;font-size:4.8px;color:#e6e6e6;white-space:nowrap;-webkit-text-stroke:0.15px #e6e6e6;">-17.462</div>
<div style="right:123.5px;text-align:right;top:397.30px;height:8px;line-height:8px;font-size:4.8px;color:#e6e6e6;white-space:nowrap;-webkit-text-stroke:0.15px #e6e6e6;">-16.398</div>
<div style="right:83.10000000000002px;text-align:right;top:390.40px;height:8px;line-height:8px;font-size:4.8px;color:#e6e6e6;white-space:nowrap;-webkit-text-stroke:0.15px #e6e6e6;">0.648</div>
<div style="right:83.10000000000002px;text-align:right;top:397.30px;height:8px;line-height:8px;font-size:4.8px;color:#e6e6e6;white-space:nowrap;-webkit-text-stroke:0.15px #e6e6e6;">1.713</div>
<div style="left:660.6px;top:312.0px;width:7.399999999999977px;height:7.0px;background:#1e1f21;"></div>
<svg style="position:absolute;left:660.6px;top:312.0px" width="7.399999999999977" height="7.0" viewBox="0 0 7.399999999999977 7.0"><path d="M1.8,4.8 L5.2,4.8 L3.5,2.4 Z" fill="#c8c8c8"/></svg>
<div style="left:660.6px;top:319px;width:7.399999999999977px;height:76.39999999999998px;background:#c9cdd1;"></div>
<svg style="position:absolute;left:660.6px;top:395.4px" width="7.399999999999977" height="8.100000000000023" viewBox="0 0 7.399999999999977 8.100000000000023"><path d="M1.8,2.3 L5.2,2.3 L3.5,4.6 Z" fill="#e8e8e8"/></svg>
<div style="left:68.5px;top:405.2px;width:474.1px;height:8.699999999999989px;background:#118a11;"></div>
<div style="left:109.60000000000002px;width:300px;text-align:center;top:406.40px;height:8px;line-height:8px;font-size:4.9px;color:#d8f2d8;white-space:nowrap;-webkit-text-stroke:0.15px #d8f2d8;">Frame 1 Sync Found</div>
<svg style="position:absolute;left:536.5px;top:407.5px" width="5.0" height="4.0" viewBox="0 0 5.0 4.0"><path d="M1,1.2 L2.5,2.8 L4,1.2" fill="none" stroke="#cfe8cf" stroke-width="0.7"/></svg>
<div style="left:542.6px;top:403.5px;width:125.69999999999993px;height:12.5px;background:#e4e8eb;"></div>
<div style="left:552.7px;top:406.80px;height:8px;line-height:8px;font-size:4.9px;color:#8c9096;white-space:nowrap;-webkit-text-stroke:0.15px #8c9096;">Measuring...</div>
<div style="left:591px;top:406.6px;width:32px;height:6.099999999999966px;background:#1f73d6;"></div>
<div style="left:626px;top:406.4px;width:11px;height:0.5px;background:#a0a4a8;"></div>
<div style="left:626px;top:412.4px;width:11px;height:0.5px;background:#a0a4a8;"></div>
<div style="left:626.5px;top:406.50px;height:8px;line-height:8px;font-size:4.2px;color:#8c9096;white-space:nowrap;-webkit-text-stroke:0.15px #8c9096;">IWA</div>
</body></html>
